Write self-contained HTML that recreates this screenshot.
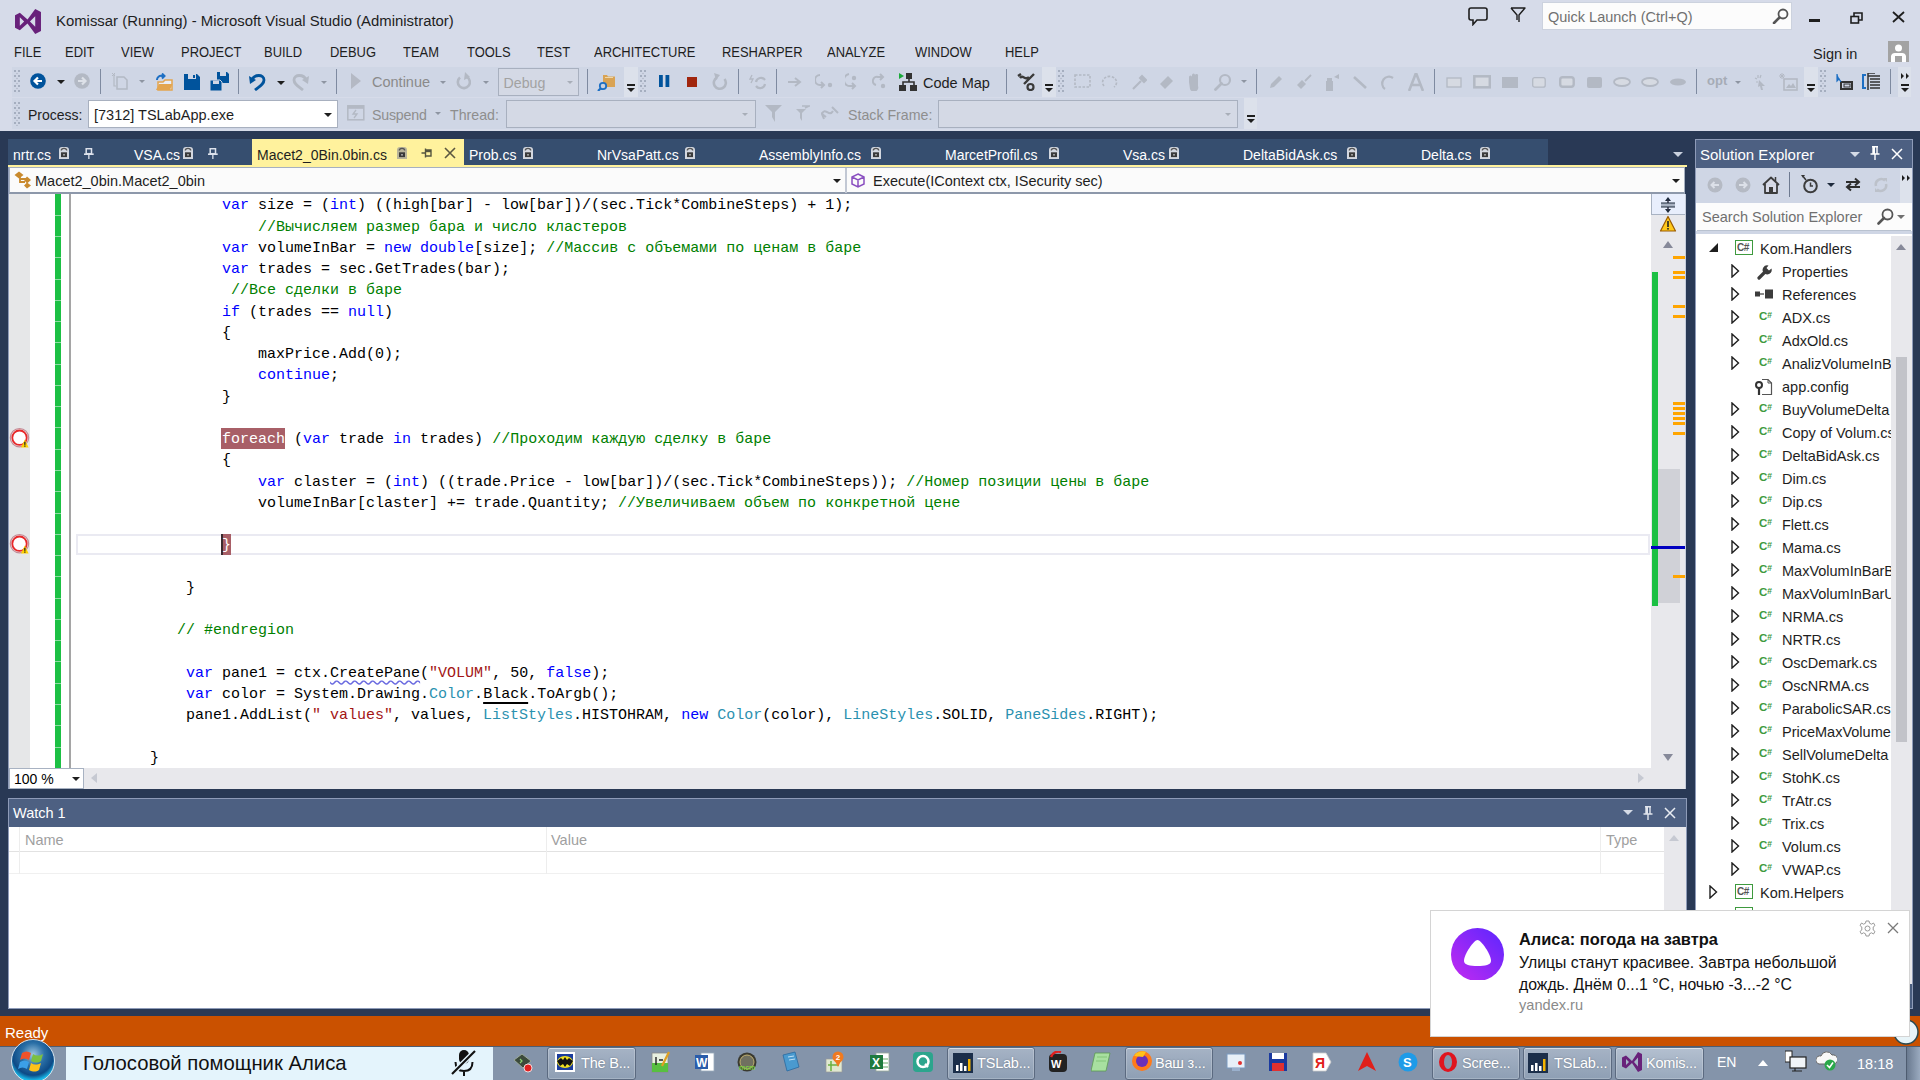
<!DOCTYPE html>
<html><head><meta charset="utf-8">
<style>
*{margin:0;padding:0;box-sizing:border-box}
html,body{width:1920px;height:1080px;overflow:hidden;background:#D6DBE9;font-family:"Liberation Sans",sans-serif;position:relative}
.a{position:absolute}
.t{position:absolute;white-space:nowrap;line-height:1}
.mono{font-family:"Liberation Mono",monospace}
.sep{position:absolute;width:1px;background:#9AA5B8}
.grip{position:absolute;width:6px;background-image:radial-gradient(circle,#8E98AA 0.8px,transparent 1px);background-size:3px 3px}
.dd{position:absolute;width:0;height:0;border-left:4px solid transparent;border-right:4px solid transparent;border-top:4px solid #1E1E1E}
.ddg{position:absolute;width:0;height:0;border-left:4px solid transparent;border-right:4px solid transparent;border-top:4px solid #A0A6B0}
/* code */
.ln{position:absolute;left:78px;height:21.25px;line-height:21.25px;font-family:"Liberation Mono",monospace;font-size:15px;white-space:pre;color:#000}
.k{color:#0000FF}.c{color:#008000}.s{color:#A31515}.ty{color:#2B91AF}
/* solution explorer rows */
.row{position:absolute;height:23px;line-height:23px;font-size:14.5px;color:#1E1E1E;white-space:nowrap}
.exp{position:absolute;width:0;height:0;border-top:5px solid transparent;border-bottom:5px solid transparent;border-left:6px solid #1E1E1E}
.exp::after{content:"";position:absolute;left:-5px;top:-3px;border-top:3px solid transparent;border-bottom:3px solid transparent;border-left:3.5px solid #fff}
.cs{position:absolute;font-size:10px;font-weight:bold;color:#3E9A3E;line-height:1;letter-spacing:-0.5px}
.tab{position:absolute;top:139px;height:26px;font-size:14px;color:#fff}
.tbtn{position:absolute;top:1047px;height:32px;border:1px solid #5E6E84;border-radius:3px;background:linear-gradient(#A9B6C8,#8C9DB3);box-shadow:inset 0 0 0 1px rgba(255,255,255,0.35)}
.tbtxt{position:absolute;top:8px;font-size:16px;color:#fff;white-space:nowrap;line-height:1}
.fe{color:#fff}.br{color:#fff}.sq{text-decoration:underline wavy #6A6AE0;text-underline-offset:3px}.ul{text-decoration:underline #000 2px;text-underline-offset:4px}
</style></head><body>

<!-- ============ TITLE BAR ============ -->
<svg class="a" style="left:15px;top:9px" width="26" height="25" viewBox="0 0 27 26"><path d="M0,6.5 L5,4 L13,11 L21,0 L27,3 L27,23 L21,26 L13,15 L5,22 L0,19.5Z M5,8.5 L5,17.5 L9.5,13Z M21,7.5 L15.5,13 L21,18.5Z" fill="#68217A" fill-rule="evenodd"/></svg>
<div class="t" style="left:56px;top:14px;font-size:14.9px;color:#1E1E1E">Komissar (Running) - Microsoft Visual Studio (Administrator)</div>

<!-- title right -->
<svg class="a" style="left:1468px;top:7px" width="20" height="19" viewBox="0 0 20 19"><path d="M3,1 H17 A2,2 0 0 1 19,3 V11 A2,2 0 0 1 17,13 H9 L5,17.5 V13 H3 A2,2 0 0 1 1,11 V3 A2,2 0 0 1 3,1Z" fill="none" stroke="#1E1E1E" stroke-width="1.6"/></svg>
<svg class="a" style="left:1510px;top:7px" width="16" height="16" viewBox="0 0 16 16"><path d="M1,1 H15 L9,8 V15 M1,1 L7,8 V13" fill="none" stroke="#1E1E1E" stroke-width="1.4" stroke-linejoin="round"/></svg>
<div class="a" style="left:1542px;top:2px;width:250px;height:28px;background:#FCFCFC;border:1px solid #CCD2DE"></div>
<div class="t" style="left:1548px;top:10px;font-size:14.5px;color:#717171">Quick Launch (Ctrl+Q)</div>
<svg class="a" style="left:1772px;top:8px" width="17" height="16" viewBox="0 0 17 16"><circle cx="11" cy="6" r="4.5" fill="none" stroke="#555" stroke-width="1.8"/><path d="M7.5,9.5 L2,15" stroke="#555" stroke-width="2.6" stroke-linecap="round"/></svg>
<div class="a" style="left:1809px;top:19px;width:11px;height:3px;background:#1E1E1E"></div>
<svg class="a" style="left:1850px;top:12px" width="13" height="12" viewBox="0 0 13 12"><rect x="1" y="4.5" width="7.5" height="6.5" fill="none" stroke="#1E1E1E" stroke-width="1.6"/><path d="M4,4.5 V1 H12 V8 H8.5" fill="none" stroke="#1E1E1E" stroke-width="1.6"/></svg>
<svg class="a" style="left:1892px;top:11px" width="13" height="12" viewBox="0 0 13 12"><path d="M1,1 L12,11 M12,1 L1,11" stroke="#1E1E1E" stroke-width="1.8"/></svg>
<div class="t" style="left:1813px;top:47px;font-size:14.5px;color:#1E1E1E">Sign in</div>
<svg class="a" style="left:1888px;top:41px" width="21" height="21" viewBox="0 0 21 21"><rect width="21" height="21" fill="#A3A3A3"/><circle cx="10.5" cy="7" r="3.5" fill="#fff"/><path d="M3,21 V15 A4,4 0 0 1 7,12 H14 A4,4 0 0 1 18,15 V21Z" fill="#fff"/><rect x="7" y="15" width="7" height="6" fill="#A3A3A3"/></svg>

<!-- ============ MENU ============ -->
<div class="t" style="top:43.5px;font-size:15.5px;color:#1E1E1E">
<span class="a" style="transform:scaleX(0.835);transform-origin:0 0;left:14px">FILE</span><span class="a" style="transform:scaleX(0.835);transform-origin:0 0;left:65px">EDIT</span><span class="a" style="transform:scaleX(0.835);transform-origin:0 0;left:121px">VIEW</span><span class="a" style="transform:scaleX(0.835);transform-origin:0 0;left:181px">PROJECT</span><span class="a" style="transform:scaleX(0.835);transform-origin:0 0;left:264px">BUILD</span><span class="a" style="transform:scaleX(0.835);transform-origin:0 0;left:330px">DEBUG</span><span class="a" style="transform:scaleX(0.835);transform-origin:0 0;left:403px">TEAM</span><span class="a" style="transform:scaleX(0.835);transform-origin:0 0;left:467px">TOOLS</span><span class="a" style="transform:scaleX(0.835);transform-origin:0 0;left:537px">TEST</span><span class="a" style="transform:scaleX(0.835);transform-origin:0 0;left:594px">ARCHITECTURE</span><span class="a" style="transform:scaleX(0.835);transform-origin:0 0;left:722px">RESHARPER</span><span class="a" style="transform:scaleX(0.835);transform-origin:0 0;left:827px">ANALYZE</span><span class="a" style="transform:scaleX(0.835);transform-origin:0 0;left:915px">WINDOW</span><span class="a" style="transform:scaleX(0.835);transform-origin:0 0;left:1005px">HELP</span>
</div>

<!-- ============ TOOLBARS ============ -->
<div class="a" style="left:12px;top:67px;width:612px;height:30px;background:#CFD6E5"></div>
<div class="a" style="left:624px;top:67px;width:14px;height:30px;background:#DCE1EB"></div>
<div class="a" style="left:627.0px;top:84px;width:8px;height:1.6px;background:#1E1E1E"></div>
<div class="a" style="left:627.0px;top:88px;width:0;height:0;border-left:4px solid transparent;border-right:4px solid transparent;border-top:4px solid #1E1E1E"></div>
<div class="a" style="left:638px;top:67px;width:404px;height:30px;background:#CFD6E5"></div>
<div class="a" style="left:1042px;top:67px;width:14px;height:30px;background:#DCE1EB"></div>
<div class="a" style="left:1045.0px;top:84px;width:8px;height:1.6px;background:#1E1E1E"></div>
<div class="a" style="left:1045.0px;top:88px;width:0;height:0;border-left:4px solid transparent;border-right:4px solid transparent;border-top:4px solid #1E1E1E"></div>
<div class="a" style="left:1056px;top:67px;width:748px;height:30px;background:#CFD6E5"></div>
<div class="a" style="left:1804px;top:67px;width:14px;height:30px;background:#DCE1EB"></div>
<div class="a" style="left:1807.0px;top:84px;width:8px;height:1.6px;background:#1E1E1E"></div>
<div class="a" style="left:1807.0px;top:88px;width:0;height:0;border-left:4px solid transparent;border-right:4px solid transparent;border-top:4px solid #1E1E1E"></div>
<div class="a" style="left:1818px;top:67px;width:80px;height:30px;background:#CFD6E5"></div>
<div class="a" style="left:1898px;top:67px;width:13px;height:30px;background:#DCE1EB"></div>
<div class="a" style="left:1900.5px;top:84px;width:8px;height:1.6px;background:#1E1E1E"></div>
<div class="a" style="left:1900.5px;top:88px;width:0;height:0;border-left:4px solid transparent;border-right:4px solid transparent;border-top:4px solid #1E1E1E"></div>
<svg class="a" style="left:1899.5px;top:72px" width="10" height="8" viewBox="0 0 10 8"><path d="M1,1 L4,4 L1,7Z M6,1 L9,4 L6,7Z" fill="#1E1E1E"/></svg>
<svg class="a" style="left:14px;top:70px" width="6" height="23" viewBox="0 0 6 23"><circle cx="1" cy="1" r="0.8" fill="#707B90"/><circle cx="5" cy="1" r="0.8" fill="#707B90"/><circle cx="3" cy="3.5" r="0.7" fill="#A8B0C0"/><circle cx="1" cy="6" r="0.8" fill="#707B90"/><circle cx="5" cy="6" r="0.8" fill="#707B90"/><circle cx="3" cy="8.5" r="0.7" fill="#A8B0C0"/><circle cx="1" cy="11" r="0.8" fill="#707B90"/><circle cx="5" cy="11" r="0.8" fill="#707B90"/><circle cx="3" cy="13.5" r="0.7" fill="#A8B0C0"/><circle cx="1" cy="16" r="0.8" fill="#707B90"/><circle cx="5" cy="16" r="0.8" fill="#707B90"/><circle cx="3" cy="18.5" r="0.7" fill="#A8B0C0"/><circle cx="1" cy="21" r="0.8" fill="#707B90"/><circle cx="5" cy="21" r="0.8" fill="#707B90"/><circle cx="3" cy="23.5" r="0.7" fill="#A8B0C0"/></svg>
<svg class="a" style="left:30px;top:73px" width="16" height="16" viewBox="0 0 16 16"><circle cx="8" cy="8" r="7.8" fill="#00539C"/><path d="M12,8 H5 M8,4.5 L4.5,8 L8,11.5" fill="none" stroke="#fff" stroke-width="2.2"/></svg>
<div class="a" style="left:57px;top:80px;width:0;height:0;border-left:4.0px solid transparent;border-right:4.0px solid transparent;border-top:4.0px solid #1E1E1E"></div>
<svg class="a" style="left:74px;top:73px" width="16" height="16" viewBox="0 0 16 16"><circle cx="8" cy="8" r="7.8" fill="#B3B9C4"/><path d="M4,8 H11 M8,4.5 L11.5,8 L8,11.5" fill="none" stroke="#DDE1E8" stroke-width="2.2"/></svg>
<div class="a" style="left:100px;top:69px;width:1px;height:25px;background:#7E8AA0"></div>
<svg class="a" style="left:111px;top:72px" width="17" height="18" viewBox="0 0 17 18"><path d="M6,5 H13 L16,8 V17 H6Z" fill="none" stroke="#B3B9C4" stroke-width="1.5"/><path d="M3,2 V14 H5" fill="none" stroke="#B3B9C4" stroke-width="1.2"/><path d="M1,1 L4,4 M4,1 L1,4" stroke="#B3B9C4" stroke-width="1"/></svg>
<div class="a" style="left:139px;top:80px;width:0;height:0;border-left:3.5px solid transparent;border-right:3.5px solid transparent;border-top:3.5px solid #8E95A2"></div>
<svg class="a" style="left:155px;top:73px" width="18" height="18" viewBox="0 0 18 18"><path d="M3,9 H8 L10,7 H17 V17 H3Z" fill="#E9EDF5" stroke="#E3A54F" stroke-width="1.5"/><path d="M1,17 L4,11 H17.5 L15,17Z" fill="#E3A54F"/><path d="M2,7 A4,4 0 0 1 7,3 H9 M7,0.5 L9.5,3 L7,5.5" fill="none" stroke="#1D6FC3" stroke-width="2"/></svg>
<svg class="a" style="left:184px;top:74px" width="16" height="16" viewBox="0 0 16 16"><path d="M0,0 H13 L16,3 V16 H0Z" fill="#00539C"/><rect x="4" y="0" width="8" height="5" fill="#CFD6E5"/><rect x="9" y="1" width="2" height="3" fill="#00539C"/></svg>
<svg class="a" style="left:210px;top:72px" width="19" height="19" viewBox="0 0 19 19"><path d="M7,0 H17 L19,2 V11 H7Z" fill="#00539C"/><rect x="10" y="0" width="6" height="4" fill="#CFD6E5"/><path d="M0,8 H10 L12,10 V19 H0Z" fill="#00539C" stroke="#CFD6E5" stroke-width="1"/><rect x="3" y="8.5" width="6" height="3.5" fill="#CFD6E5"/></svg>
<div class="a" style="left:238px;top:69px;width:1px;height:25px;background:#7E8AA0"></div>
<svg class="a" style="left:249px;top:73px" width="17" height="18" viewBox="0 0 17 18"><path d="M3,7 C5,1 15,1 15,7 C15,11 11,13 6,17" fill="none" stroke="#00539C" stroke-width="2.8"/><path d="M0,3 L1,11 L7,7Z" fill="#00539C"/></svg>
<div class="a" style="left:277px;top:81px;width:0;height:0;border-left:4.0px solid transparent;border-right:4.0px solid transparent;border-top:4.0px solid #1E1E1E"></div>
<svg class="a" style="left:292px;top:73px" width="17" height="18" viewBox="0 0 17 18"><path d="M14,7 C12,1 2,1 2,7 C2,11 6,13 11,17" fill="none" stroke="#B3B9C4" stroke-width="2.8"/><path d="M17,3 L16,11 L10,7Z" fill="#B3B9C4"/></svg>
<div class="a" style="left:321px;top:81px;width:0;height:0;border-left:3.5px solid transparent;border-right:3.5px solid transparent;border-top:3.5px solid #8E95A2"></div>
<div class="a" style="left:336px;top:69px;width:1px;height:25px;background:#7E8AA0"></div>
<svg class="a" style="left:351px;top:73px" width="10" height="16" viewBox="0 0 10 16"><path d="M0,0 L10,8 L0,16Z" fill="#B4B9C4"/></svg>
<div class="t" style="left:372px;top:75px;font-size:14.5px;color:#8A8A8A;">Continue</div>
<div class="a" style="left:440px;top:81px;width:0;height:0;border-left:3.5px solid transparent;border-right:3.5px solid transparent;border-top:3.5px solid #8E95A2"></div>
<svg class="a" style="left:456px;top:72px" width="15" height="18" viewBox="0 0 15 18"><path d="M11,5 A6,6 0 1 1 4,5.5" fill="none" stroke="#B3B9C4" stroke-width="2.6"/><path d="M9,0 L14,5 L8,8Z" fill="#B3B9C4"/></svg>
<div class="a" style="left:483px;top:81px;width:0;height:0;border-left:3.5px solid transparent;border-right:3.5px solid transparent;border-top:3.5px solid #8E95A2"></div>
<div class="a" style="left:498px;top:68px;width:81px;height:28px;background:#D4D9E5;border:1px solid #A8B0BF"></div>
<div class="t" style="left:503.5px;top:75.5px;font-size:14.2px;color:#A2A2A2;">Debug</div>
<div class="a" style="left:567px;top:81px;width:0;height:0;border-left:3.5px solid transparent;border-right:3.5px solid transparent;border-top:3.5px solid #A8AEB8"></div>
<div class="a" style="left:587px;top:69px;width:1px;height:25px;background:#7E8AA0"></div>
<svg class="a" style="left:597px;top:73px" width="19" height="18" viewBox="0 0 19 18"><path d="M6,2 H10 L11,3.5 H18 V14 H6Z" fill="#D9A354"/><rect x="8" y="4" width="8" height="1" fill="#F0D8A8"/><circle cx="6" cy="13" r="3.2" fill="#C9D1DF" stroke="#1D6FC3" stroke-width="1.8"/><path d="M3.5,15.5 L1,18" stroke="#1D6FC3" stroke-width="2.2"/></svg>
<svg class="a" style="left:640px;top:70px" width="6" height="23" viewBox="0 0 6 23"><circle cx="1" cy="1" r="0.8" fill="#707B90"/><circle cx="5" cy="1" r="0.8" fill="#707B90"/><circle cx="3" cy="3.5" r="0.7" fill="#A8B0C0"/><circle cx="1" cy="6" r="0.8" fill="#707B90"/><circle cx="5" cy="6" r="0.8" fill="#707B90"/><circle cx="3" cy="8.5" r="0.7" fill="#A8B0C0"/><circle cx="1" cy="11" r="0.8" fill="#707B90"/><circle cx="5" cy="11" r="0.8" fill="#707B90"/><circle cx="3" cy="13.5" r="0.7" fill="#A8B0C0"/><circle cx="1" cy="16" r="0.8" fill="#707B90"/><circle cx="5" cy="16" r="0.8" fill="#707B90"/><circle cx="3" cy="18.5" r="0.7" fill="#A8B0C0"/><circle cx="1" cy="21" r="0.8" fill="#707B90"/><circle cx="5" cy="21" r="0.8" fill="#707B90"/><circle cx="3" cy="23.5" r="0.7" fill="#A8B0C0"/></svg>
<svg class="a" style="left:659px;top:75px" width="11" height="12" viewBox="0 0 11 12"><rect x="0" y="0" width="3.8" height="12" fill="#00539C"/><rect x="6.5" y="0" width="3.8" height="12" fill="#00539C"/></svg>
<svg class="a" style="left:687px;top:77px" width="10" height="10" viewBox="0 0 10 10"><rect x="0" y="0" width="10" height="10" fill="#A1260D"/></svg>
<svg class="a" style="left:712px;top:73px" width="16" height="18" viewBox="0 0 16 18"><path d="M12.5,6 A6,6 0 1 1 5,4.5" fill="none" stroke="#B3B9C4" stroke-width="2.6"/><path d="M2,0 L8,2 L4,7Z" fill="#B3B9C4"/></svg>
<div class="a" style="left:738px;top:69px;width:1px;height:25px;background:#7E8AA0"></div>
<svg class="a" style="left:749px;top:73px" width="18" height="17" viewBox="0 0 18 17"><path d="M3,2 L1,6 H4 L2,10" fill="none" stroke="#B3B9C4" stroke-width="1.3"/><path d="M7,9 A5,5 0 0 1 16,7 M16,11 A5,5 0 0 1 7,13" fill="none" stroke="#B3B9C4" stroke-width="2.2"/></svg>
<div class="a" style="left:776px;top:69px;width:1px;height:25px;background:#7E8AA0"></div>
<svg class="a" style="left:788px;top:77px" width="14" height="10" viewBox="0 0 14 10"><path d="M0,5 H11 M7,1 L12,5 L7,9" fill="none" stroke="#B3B9C4" stroke-width="2"/></svg>
<svg class="a" style="left:815px;top:73px" width="18" height="17" viewBox="0 0 18 17"><path d="M5,2 A5,5 0 0 0 5,12 H9 M6,9 L9,12 L6,15" fill="none" stroke="#B3B9C4" stroke-width="2"/><circle cx="15" cy="12" r="2.2" fill="#B3B9C4"/></svg>
<svg class="a" style="left:845px;top:72px" width="15" height="19" viewBox="0 0 15 19"><path d="M4,2 A6,6 0 0 0 6,14 H9 M7,11 L10,14 L7,17" fill="none" stroke="#B3B9C4" stroke-width="2"/><circle cx="9" cy="6" r="2.2" fill="#B3B9C4"/></svg>
<svg class="a" style="left:872px;top:73px" width="16" height="17" viewBox="0 0 16 17"><path d="M10,4 H6 A4,4 0 0 0 4,12 M8,1 L11,4 L8,7" fill="none" stroke="#B3B9C4" stroke-width="2"/><circle cx="11" cy="13" r="2.2" fill="#B3B9C4"/></svg>
<svg class="a" style="left:899px;top:73px" width="18" height="18" viewBox="0 0 18 18"><rect x="7" y="0" width="6" height="6" fill="#333"/><path d="M0,0 L5,3 L0,6Z" fill="#1AAA3A"/><path d="M10,6 V9 M4,12 V9 H15 V12" fill="none" stroke="#333" stroke-width="1.6"/><rect x="0" y="12" width="7" height="6" fill="#333"/><rect x="11" y="12" width="7" height="6" fill="#333"/></svg>
<div class="t" style="left:923px;top:75.5px;font-size:14.5px;color:#1E1E1E;">Code Map</div>
<div class="a" style="left:1006px;top:69px;width:1px;height:25px;background:#7E8AA0"></div>
<svg class="a" style="left:1017px;top:73px" width="19" height="18" viewBox="0 0 19 18"><path d="M1,3 L4,1 M3,5 C6,1 8,8 12,4 M7,11 L17,1" fill="none" stroke="#3A3A3A" stroke-width="2.4"/><circle cx="13.5" cy="14" r="3" fill="none" stroke="#3A3A3A" stroke-width="2.2"/></svg>
<svg class="a" style="left:1058px;top:70px" width="6" height="23" viewBox="0 0 6 23"><circle cx="1" cy="1" r="0.8" fill="#707B90"/><circle cx="5" cy="1" r="0.8" fill="#707B90"/><circle cx="3" cy="3.5" r="0.7" fill="#A8B0C0"/><circle cx="1" cy="6" r="0.8" fill="#707B90"/><circle cx="5" cy="6" r="0.8" fill="#707B90"/><circle cx="3" cy="8.5" r="0.7" fill="#A8B0C0"/><circle cx="1" cy="11" r="0.8" fill="#707B90"/><circle cx="5" cy="11" r="0.8" fill="#707B90"/><circle cx="3" cy="13.5" r="0.7" fill="#A8B0C0"/><circle cx="1" cy="16" r="0.8" fill="#707B90"/><circle cx="5" cy="16" r="0.8" fill="#707B90"/><circle cx="3" cy="18.5" r="0.7" fill="#A8B0C0"/><circle cx="1" cy="21" r="0.8" fill="#707B90"/><circle cx="5" cy="21" r="0.8" fill="#707B90"/><circle cx="3" cy="23.5" r="0.7" fill="#A8B0C0"/></svg>
<svg class="a" style="left:1074px;top:74px" width="17" height="14" viewBox="0 0 17 14"><rect x="1" y="1" width="15" height="12" fill="none" stroke="#B3B9C4" stroke-width="1.6" stroke-dasharray="2.5,1.5"/></svg>
<svg class="a" style="left:1101px;top:74px" width="18" height="15" viewBox="0 0 18 15"><path d="M3,12 A7,6 0 1 1 13,13" fill="none" stroke="#B3B9C4" stroke-width="1.6" stroke-dasharray="2.5,1.5"/></svg>
<svg class="a" style="left:1131px;top:73px" width="16" height="18" viewBox="0 0 16 18"><path d="M2,16 L10,8" stroke="#B3B9C4" stroke-width="2.2"/><path d="M9,5 L13,9 M11,3 L15,7 L13,9 L9,5Z" fill="#B3B9C4" stroke="#B3B9C4" stroke-width="2"/></svg>
<svg class="a" style="left:1159px;top:75px" width="15" height="14" viewBox="0 0 15 14"><path d="M1,9 L9,1 L14,6 L6,14Z" fill="#B3B9C4"/></svg>
<svg class="a" style="left:1186px;top:72px" width="16" height="19" viewBox="0 0 16 19"><path d="M3,10 V5 A1.5,1.5 0 0 1 6,5 V3 A1.5,1.5 0 0 1 9,3 A1.5,1.5 0 0 1 12,4 V14 A4,4 0 0 1 4,17Z" fill="#B3B9C4"/></svg>
<svg class="a" style="left:1214px;top:73px" width="18" height="18" viewBox="0 0 18 18"><circle cx="11" cy="7" r="5" fill="none" stroke="#B3B9C4" stroke-width="2.2"/><path d="M7.5,10.5 L1.5,16.5" stroke="#B3B9C4" stroke-width="2.8" stroke-linecap="round"/></svg>
<div class="a" style="left:1241px;top:80px;width:0;height:0;border-left:3.5px solid transparent;border-right:3.5px solid transparent;border-top:3.5px solid #8E95A2"></div>
<div class="a" style="left:1256px;top:69px;width:1px;height:25px;background:#7E8AA0"></div>
<svg class="a" style="left:1269px;top:75px" width="14" height="14" viewBox="0 0 14 14"><path d="M1,13 L2,9 L10,1 L13,4 L5,12Z" fill="#B3B9C4"/></svg>
<svg class="a" style="left:1296px;top:74px" width="16" height="16" viewBox="0 0 16 16"><path d="M9,7 L15,1" stroke="#B3B9C4" stroke-width="1.8"/><path d="M1,11 L6,6 L10,10 L5,15Z" fill="#B3B9C4"/></svg>
<svg class="a" style="left:1326px;top:74px" width="14" height="17" viewBox="0 0 14 17"><rect x="0" y="7" width="7" height="10" fill="#B3B9C4"/><rect x="1" y="4" width="5" height="3" fill="#B3B9C4"/><path d="M8,3 L13,0 V5Z" fill="#B3B9C4"/></svg>
<svg class="a" style="left:1353px;top:76px" width="14" height="13" viewBox="0 0 14 13"><path d="M1,1 L13,12" stroke="#B3B9C4" stroke-width="2.6"/></svg>
<svg class="a" style="left:1380px;top:74px" width="15" height="16" viewBox="0 0 15 16"><path d="M13,4 A6.5,6.5 0 1 0 5,15" fill="none" stroke="#B3B9C4" stroke-width="2.2"/></svg>
<svg class="a" style="left:1408px;top:73px" width="16" height="18" viewBox="0 0 16 18"><path d="M1,18 L8,0 L15,18 M3.5,12 H12.5" fill="none" stroke="#B3B9C4" stroke-width="2.6"/></svg>
<div class="a" style="left:1434px;top:69px;width:1px;height:25px;background:#7E8AA0"></div>
<svg class="a" style="left:1446px;top:77px" width="16" height="11" viewBox="0 0 16 11"><rect x="1" y="1" width="14" height="9" fill="#D6DAE2" stroke="#B3B9C4" stroke-width="1.3"/></svg>
<svg class="a" style="left:1473px;top:75px" width="18" height="14" viewBox="0 0 18 14"><rect x="1.3" y="1.3" width="15.5" height="11" fill="#D6DAE2" stroke="#B3B9C4" stroke-width="2.5"/></svg>
<svg class="a" style="left:1502px;top:77px" width="16" height="11" viewBox="0 0 16 11"><rect x="0" y="0" width="16" height="11" fill="#B3B9C4"/></svg>
<svg class="a" style="left:1532px;top:77px" width="14" height="11" viewBox="0 0 14 11"><rect x="0.7" y="0.7" width="12.5" height="9.5" rx="2" fill="#D6DAE2" stroke="#B3B9C4" stroke-width="1.3"/></svg>
<svg class="a" style="left:1559px;top:76px" width="16" height="12" viewBox="0 0 16 12"><rect x="1.2" y="1.2" width="13.5" height="9.5" rx="2.5" fill="#D6DAE2" stroke="#B3B9C4" stroke-width="2.4"/></svg>
<svg class="a" style="left:1587px;top:77px" width="15" height="11" viewBox="0 0 15 11"><rect x="0" y="0" width="15" height="11" rx="2" fill="#B3B9C4"/></svg>
<svg class="a" style="left:1613px;top:77px" width="18" height="10" viewBox="0 0 18 10"><ellipse cx="9" cy="5" rx="8" ry="4" fill="#D6DAE2" stroke="#B3B9C4" stroke-width="1.8"/></svg>
<svg class="a" style="left:1641px;top:77px" width="18" height="10" viewBox="0 0 18 10"><ellipse cx="9" cy="5" rx="8" ry="4" fill="#D6DAE2" stroke="#B3B9C4" stroke-width="1.8"/></svg>
<svg class="a" style="left:1670px;top:78px" width="16" height="8" viewBox="0 0 16 8"><ellipse cx="8" cy="4" rx="8" ry="3.5" fill="#B3B9C4"/></svg>
<div class="a" style="left:1696px;top:69px;width:1px;height:25px;background:#7E8AA0"></div>
<div class="t" style="left:1707px;top:73.5px;font-size:13px;color:#A6ACB6;font-weight:bold">opt</div>
<div class="a" style="left:1735px;top:81px;width:0;height:0;border-left:3.5px solid transparent;border-right:3.5px solid transparent;border-top:3.5px solid #8E95A2"></div>
<svg class="a" style="left:1754px;top:74px" width="12" height="16" viewBox="0 0 12 16"><path d="M4,1 V4 M1,4 L3,5 M7,1 L6,4 M2,8 H4" stroke="#B3B9C4" stroke-width="1.2"/><path d="M5,6 L11,12 L8,12 L9,16 L7,16 L6,12 L4,13Z" fill="#B3B9C4"/></svg>
<svg class="a" style="left:1779px;top:73px" width="19" height="18" viewBox="0 0 19 18"><rect x="5" y="6" width="13" height="11" fill="none" stroke="#B3B9C4" stroke-width="1.6"/><path d="M7,15 L10,11 L12,13 L14,10 L17,15Z" fill="#B3B9C4"/><path d="M3,0 V6 M0,3 H6 M1,1 L5,5 M5,1 L1,5" stroke="#B3B9C4" stroke-width="1"/></svg>
<svg class="a" style="left:1820px;top:70px" width="6" height="23" viewBox="0 0 6 23"><circle cx="1" cy="1" r="0.8" fill="#707B90"/><circle cx="5" cy="1" r="0.8" fill="#707B90"/><circle cx="3" cy="3.5" r="0.7" fill="#A8B0C0"/><circle cx="1" cy="6" r="0.8" fill="#707B90"/><circle cx="5" cy="6" r="0.8" fill="#707B90"/><circle cx="3" cy="8.5" r="0.7" fill="#A8B0C0"/><circle cx="1" cy="11" r="0.8" fill="#707B90"/><circle cx="5" cy="11" r="0.8" fill="#707B90"/><circle cx="3" cy="13.5" r="0.7" fill="#A8B0C0"/><circle cx="1" cy="16" r="0.8" fill="#707B90"/><circle cx="5" cy="16" r="0.8" fill="#707B90"/><circle cx="3" cy="18.5" r="0.7" fill="#A8B0C0"/><circle cx="1" cy="21" r="0.8" fill="#707B90"/><circle cx="5" cy="21" r="0.8" fill="#707B90"/><circle cx="3" cy="23.5" r="0.7" fill="#A8B0C0"/></svg>
<svg class="a" style="left:1836px;top:74px" width="17" height="16" viewBox="0 0 17 16"><rect x="5" y="8" width="11" height="7" fill="none" stroke="#333" stroke-width="2"/><rect x="8" y="10" width="6" height="3" fill="none" stroke="#333" stroke-width="1"/><path d="M1,0 L1,7 L3,5 L5,8" fill="#1D6FC3" stroke="#1D6FC3" stroke-width="1.2"/></svg>
<svg class="a" style="left:1862px;top:73px" width="19" height="18" viewBox="0 0 19 18"><path d="M4,2 H1 V15 H4" fill="none" stroke="#1D6FC3" stroke-width="2"/><path d="M6,0 H13 M6,3 H18 M8,6 H18 M8,9 H18 M8,12 H18 M8,15 H18 M6,0 V17" stroke="#333" stroke-width="1.5"/></svg>
<div class="a" style="left:1890px;top:69px;width:1px;height:25px;background:#7E8AA0"></div>
<div class="a" style="left:12px;top:98px;width:1232px;height:31px;background:#CFD6E5"></div>
<div class="a" style="left:1244px;top:98px;width:13px;height:31px;background:#DCE1EB"></div>
<div class="a" style="left:1246.5px;top:115px;width:8px;height:1.6px;background:#1E1E1E"></div>
<div class="a" style="left:1246.5px;top:119px;width:0;height:0;border-left:4px solid transparent;border-right:4px solid transparent;border-top:4px solid #1E1E1E"></div>
<svg class="a" style="left:14px;top:102px" width="6" height="24" viewBox="0 0 6 24"><circle cx="1" cy="1" r="0.8" fill="#707B90"/><circle cx="5" cy="1" r="0.8" fill="#707B90"/><circle cx="3" cy="3.5" r="0.7" fill="#A8B0C0"/><circle cx="1" cy="6" r="0.8" fill="#707B90"/><circle cx="5" cy="6" r="0.8" fill="#707B90"/><circle cx="3" cy="8.5" r="0.7" fill="#A8B0C0"/><circle cx="1" cy="11" r="0.8" fill="#707B90"/><circle cx="5" cy="11" r="0.8" fill="#707B90"/><circle cx="3" cy="13.5" r="0.7" fill="#A8B0C0"/><circle cx="1" cy="16" r="0.8" fill="#707B90"/><circle cx="5" cy="16" r="0.8" fill="#707B90"/><circle cx="3" cy="18.5" r="0.7" fill="#A8B0C0"/><circle cx="1" cy="21" r="0.8" fill="#707B90"/><circle cx="5" cy="21" r="0.8" fill="#707B90"/><circle cx="3" cy="23.5" r="0.7" fill="#A8B0C0"/></svg>
<div class="t" style="left:28px;top:107.5px;font-size:14px;color:#1E1E1E;">Process:</div>
<div class="a" style="left:88px;top:100px;width:250px;height:28px;background:#fff;border:1px solid #A8B0BF"></div>
<div class="t" style="left:94px;top:107.5px;font-size:14.5px;color:#1E1E1E;">[7312] TSLabApp.exe</div>
<div class="a" style="left:324px;top:113px;width:0;height:0;border-left:4.0px solid transparent;border-right:4.0px solid transparent;border-top:4.0px solid #1E1E1E"></div>
<svg class="a" style="left:347px;top:105px" width="18" height="16" viewBox="0 0 18 16"><rect x="0.8" y="0.8" width="16" height="14" fill="none" stroke="#B3B9C4" stroke-width="1.5"/><rect x="0.8" y="0.8" width="16" height="3" fill="#B3B9C4"/><path d="M9,5 L6,9 H10 L7,13" fill="none" stroke="#B3B9C4" stroke-width="1.3"/></svg>
<div class="t" style="left:372px;top:107.5px;font-size:14.2px;color:#8E8E8E;letter-spacing:-0.2px">Suspend</div>
<div class="a" style="left:435px;top:112px;width:0;height:0;border-left:3.5px solid transparent;border-right:3.5px solid transparent;border-top:3.5px solid #8E95A2"></div>
<div class="t" style="left:450px;top:107.5px;font-size:14.2px;color:#8E8E8E;">Thread:</div>
<div class="a" style="left:506px;top:100px;width:250px;height:28px;background:#D4D9E5;border:1px solid #A8B0BF"></div>
<div class="a" style="left:742px;top:113px;width:0;height:0;border-left:3.5px solid transparent;border-right:3.5px solid transparent;border-top:3.5px solid #A8AEB8"></div>
<svg class="a" style="left:765px;top:105px" width="17" height="17" viewBox="0 0 17 17"><path d="M0,0 H17 L10,7 V17 L7,12 V7Z" fill="#B3B9C4"/></svg>
<svg class="a" style="left:793px;top:105px" width="18" height="17" viewBox="0 0 18 17"><path d="M3,4 H13 L9,8 V16 L7,13 V8Z" fill="#B3B9C4"/><path d="M9,1 H17 M12,3 L16,1" stroke="#B3B9C4" stroke-width="1.5"/></svg>
<svg class="a" style="left:821px;top:106px" width="18" height="14" viewBox="0 0 18 14"><path d="M1,8 C4,0 8,12 12,5 M11,1 L17,7 M5,11 L1,8 L3,13" fill="none" stroke="#B3B9C4" stroke-width="2"/></svg>
<div class="t" style="left:848px;top:107.5px;font-size:14.2px;color:#8E8E8E;">Stack Frame:</div>
<div class="a" style="left:938px;top:100px;width:300px;height:28px;background:#D4D9E5;border:1px solid #A8B0BF"></div>
<div class="a" style="left:1225px;top:113px;width:0;height:0;border-left:3.5px solid transparent;border-right:3.5px solid transparent;border-top:3.5px solid #A8AEB8"></div>


<!-- dark environment -->
<div class="a" style="left:0;top:131px;width:1920px;height:885px;background:#293955"></div>

<!-- ============ TAB WELL ============ -->
<div class="a" style="left:8px;top:139px;width:1540px;height:26px;background:#364E6F"></div>
<div class="a" style="left:252px;top:139px;width:212px;height:26px;background:#FFF29D"></div>
<div class="a" style="left:8px;top:165px;width:1679px;height:2px;background:#FFF29D"></div>

<!-- nav bar -->
<div class="a" style="left:9px;top:167px;width:1676px;height:27px;background:#FBFBFB;border:1px solid #A6B0C0;border-bottom:2px solid #8D98AA"></div>

<!-- tabs -->
<div class="t" style="left:13px;top:148px;font-size:14px;color:#fff">nrtr.cs</div>
<svg class="a" style="left:59px;top:147px" width="10" height="12" viewBox="0 0 10 12"><path d="M0,3 A3,3 0 0 1 3,0 H7 A3,3 0 0 1 10,3 V12 H0Z" fill="#D3D7DF"/><path d="M2.3,3.6 A2.7,2.2 0 0 1 7.7,3.6" fill="none" stroke="#555" stroke-width="1.3"/><rect x="2" y="5.3" width="6" height="4.8" fill="#3A3A3A"/><rect x="4.4" y="7" width="1.2" height="1.6" fill="#ddd"/></svg>
<svg class="a" style="left:84px;top:148px" width="10" height="11" viewBox="0 0 10 11"><rect x="2.2" y="0.7" width="5.3" height="5" fill="none" stroke="#DDE2EC" stroke-width="1.5"/><path d="M0,6.2 H9.7" stroke="#DDE2EC" stroke-width="1.6"/><path d="M4.85,6.5 V11" stroke="#DDE2EC" stroke-width="1.3"/></svg>
<div class="t" style="left:134px;top:148px;font-size:14px;color:#fff">VSA.cs</div>
<svg class="a" style="left:183px;top:147px" width="10" height="12" viewBox="0 0 10 12"><path d="M0,3 A3,3 0 0 1 3,0 H7 A3,3 0 0 1 10,3 V12 H0Z" fill="#D3D7DF"/><path d="M2.3,3.6 A2.7,2.2 0 0 1 7.7,3.6" fill="none" stroke="#555" stroke-width="1.3"/><rect x="2" y="5.3" width="6" height="4.8" fill="#3A3A3A"/><rect x="4.4" y="7" width="1.2" height="1.6" fill="#ddd"/></svg>
<svg class="a" style="left:208px;top:148px" width="10" height="11" viewBox="0 0 10 11"><rect x="2.2" y="0.7" width="5.3" height="5" fill="none" stroke="#DDE2EC" stroke-width="1.5"/><path d="M0,6.2 H9.7" stroke="#DDE2EC" stroke-width="1.6"/><path d="M4.85,6.5 V11" stroke="#DDE2EC" stroke-width="1.3"/></svg>
<div class="t" style="left:469px;top:148px;font-size:14px;color:#fff">Prob.cs</div>
<svg class="a" style="left:523px;top:147px" width="10" height="12" viewBox="0 0 10 12"><path d="M0,3 A3,3 0 0 1 3,0 H7 A3,3 0 0 1 10,3 V12 H0Z" fill="#D3D7DF"/><path d="M2.3,3.6 A2.7,2.2 0 0 1 7.7,3.6" fill="none" stroke="#555" stroke-width="1.3"/><rect x="2" y="5.3" width="6" height="4.8" fill="#3A3A3A"/><rect x="4.4" y="7" width="1.2" height="1.6" fill="#ddd"/></svg>
<div class="t" style="left:597px;top:148px;font-size:14px;color:#fff">NrVsaPatt.cs</div>
<svg class="a" style="left:685px;top:147px" width="10" height="12" viewBox="0 0 10 12"><path d="M0,3 A3,3 0 0 1 3,0 H7 A3,3 0 0 1 10,3 V12 H0Z" fill="#D3D7DF"/><path d="M2.3,3.6 A2.7,2.2 0 0 1 7.7,3.6" fill="none" stroke="#555" stroke-width="1.3"/><rect x="2" y="5.3" width="6" height="4.8" fill="#3A3A3A"/><rect x="4.4" y="7" width="1.2" height="1.6" fill="#ddd"/></svg>
<div class="t" style="left:759px;top:148px;font-size:14px;color:#fff">AssemblyInfo.cs</div>
<svg class="a" style="left:871px;top:147px" width="10" height="12" viewBox="0 0 10 12"><path d="M0,3 A3,3 0 0 1 3,0 H7 A3,3 0 0 1 10,3 V12 H0Z" fill="#D3D7DF"/><path d="M2.3,3.6 A2.7,2.2 0 0 1 7.7,3.6" fill="none" stroke="#555" stroke-width="1.3"/><rect x="2" y="5.3" width="6" height="4.8" fill="#3A3A3A"/><rect x="4.4" y="7" width="1.2" height="1.6" fill="#ddd"/></svg>
<div class="t" style="left:945px;top:148px;font-size:14px;color:#fff">MarcetProfil.cs</div>
<svg class="a" style="left:1049px;top:147px" width="10" height="12" viewBox="0 0 10 12"><path d="M0,3 A3,3 0 0 1 3,0 H7 A3,3 0 0 1 10,3 V12 H0Z" fill="#D3D7DF"/><path d="M2.3,3.6 A2.7,2.2 0 0 1 7.7,3.6" fill="none" stroke="#555" stroke-width="1.3"/><rect x="2" y="5.3" width="6" height="4.8" fill="#3A3A3A"/><rect x="4.4" y="7" width="1.2" height="1.6" fill="#ddd"/></svg>
<div class="t" style="left:1123px;top:148px;font-size:14px;color:#fff">Vsa.cs</div>
<svg class="a" style="left:1169px;top:147px" width="10" height="12" viewBox="0 0 10 12"><path d="M0,3 A3,3 0 0 1 3,0 H7 A3,3 0 0 1 10,3 V12 H0Z" fill="#D3D7DF"/><path d="M2.3,3.6 A2.7,2.2 0 0 1 7.7,3.6" fill="none" stroke="#555" stroke-width="1.3"/><rect x="2" y="5.3" width="6" height="4.8" fill="#3A3A3A"/><rect x="4.4" y="7" width="1.2" height="1.6" fill="#ddd"/></svg>
<div class="t" style="left:1243px;top:148px;font-size:14px;color:#fff">DeltaBidAsk.cs</div>
<svg class="a" style="left:1347px;top:147px" width="10" height="12" viewBox="0 0 10 12"><path d="M0,3 A3,3 0 0 1 3,0 H7 A3,3 0 0 1 10,3 V12 H0Z" fill="#D3D7DF"/><path d="M2.3,3.6 A2.7,2.2 0 0 1 7.7,3.6" fill="none" stroke="#555" stroke-width="1.3"/><rect x="2" y="5.3" width="6" height="4.8" fill="#3A3A3A"/><rect x="4.4" y="7" width="1.2" height="1.6" fill="#ddd"/></svg>
<div class="t" style="left:1421px;top:148px;font-size:14px;color:#fff">Delta.cs</div>
<svg class="a" style="left:1480px;top:147px" width="10" height="12" viewBox="0 0 10 12"><path d="M0,3 A3,3 0 0 1 3,0 H7 A3,3 0 0 1 10,3 V12 H0Z" fill="#D3D7DF"/><path d="M2.3,3.6 A2.7,2.2 0 0 1 7.7,3.6" fill="none" stroke="#555" stroke-width="1.3"/><rect x="2" y="5.3" width="6" height="4.8" fill="#3A3A3A"/><rect x="4.4" y="7" width="1.2" height="1.6" fill="#ddd"/></svg>
<div class="t" style="left:257px;top:148px;font-size:14px;color:#1E1E1E">Macet2_0Bin.0bin.cs</div>
<svg class="a" style="left:397px;top:147px" width="10" height="12" viewBox="0 0 10 12"><path d="M0,3 A3,3 0 0 1 3,0 H7 A3,3 0 0 1 10,3 V12 H0Z" fill="#B8B49A"/><path d="M2.3,3.6 A2.7,2.2 0 0 1 7.7,3.6" fill="none" stroke="#555" stroke-width="1.3"/><rect x="2" y="5.3" width="6" height="4.8" fill="#3A3A3A"/><rect x="4.4" y="7" width="1.2" height="1.6" fill="#ddd"/></svg>
<svg class="a" style="left:421px;top:148px" width="11" height="10" viewBox="0 0 11 10"><path d="M0.5,5 H4.5 M4.5,0.5 V9.5 M4.5,2 H10 V8 H4.5" fill="none" stroke="#55553F" stroke-width="1.4"/><rect x="4.5" y="2" width="5.5" height="2.2" fill="#55553F"/></svg>
<svg class="a" style="left:444px;top:147px" width="12" height="12" viewBox="0 0 12 12"><path d="M1,1 L11,11 M11,1 L1,11" stroke="#5B5740" stroke-width="1.6"/></svg>
<div class="a" style="left:1673px;top:152px;width:0;height:0;border-left:5px solid transparent;border-right:5px solid transparent;border-top:5px solid #C9D1DE"></div>
<svg class="a" style="left:14px;top:171px" width="19" height="18" viewBox="0 0 19 18"><path d="M5,0.5 L9.5,4 L5,7.5 L0.5,4Z" fill="#C98A2E"/><path d="M6,5 V11 H11 M6,8 H13" fill="none" stroke="#C98A2E" stroke-width="1.8"/><path d="M13,5.5 L17,9 L13,12.5 L10,9Z M13,11.5 L17,14.5 L13,17.5 L10,14.5Z" fill="#C98A2E"/></svg>
<div class="t" style="left:35px;top:173.5px;font-size:14.5px;color:#1E1E1E">Macet2_0bin.Macet2_0bin</div>
<div class="dd" style="left:833px;top:179px"></div>
<div class="a" style="left:845px;top:168px;width:2px;height:25px;background:#C2C8D4"></div>
<svg class="a" style="left:851px;top:173px" width="14" height="15" viewBox="0 0 14 15"><path d="M7,1 L13,4 V11 L7,14 L1,11 V4Z M1,4 L7,7 L13,4 M7,7 V14" fill="none" stroke="#8A4FC0" stroke-width="1.5"/></svg>
<div class="t" style="left:873px;top:173.5px;font-size:14.5px;color:#1E1E1E">Execute(IContext ctx, ISecurity sec)</div>
<div class="dd" style="left:1672px;top:179px"></div>

<!-- ============ EDITOR ============ -->
<div class="a" style="left:8px;top:167px;width:1px;height:622px;background:#8E9BB8"></div>
<div class="a" style="left:9px;top:194px;width:1642px;height:574px;background:#fff"></div>
<div class="a" style="left:9px;top:194px;width:21px;height:574px;background:#E6E7E8"></div>
<div class="a" style="left:55px;top:194px;width:6px;height:574px;background:#1CC044"></div><div class="a" style="left:55px;top:215px;width:6px;height:1px;background:#8FDCA4"></div><div class="a" style="left:55px;top:236px;width:6px;height:1px;background:#8FDCA4"></div><div class="a" style="left:55px;top:257px;width:6px;height:1px;background:#8FDCA4"></div><div class="a" style="left:55px;top:279px;width:6px;height:1px;background:#8FDCA4"></div><div class="a" style="left:55px;top:300px;width:6px;height:1px;background:#8FDCA4"></div><div class="a" style="left:55px;top:321px;width:6px;height:1px;background:#8FDCA4"></div><div class="a" style="left:55px;top:342px;width:6px;height:1px;background:#8FDCA4"></div><div class="a" style="left:55px;top:364px;width:6px;height:1px;background:#8FDCA4"></div><div class="a" style="left:55px;top:385px;width:6px;height:1px;background:#8FDCA4"></div><div class="a" style="left:55px;top:406px;width:6px;height:1px;background:#8FDCA4"></div><div class="a" style="left:55px;top:427px;width:6px;height:1px;background:#8FDCA4"></div><div class="a" style="left:55px;top:449px;width:6px;height:1px;background:#8FDCA4"></div><div class="a" style="left:55px;top:470px;width:6px;height:1px;background:#8FDCA4"></div><div class="a" style="left:55px;top:491px;width:6px;height:1px;background:#8FDCA4"></div><div class="a" style="left:55px;top:513px;width:6px;height:1px;background:#8FDCA4"></div><div class="a" style="left:55px;top:534px;width:6px;height:1px;background:#8FDCA4"></div><div class="a" style="left:55px;top:555px;width:6px;height:1px;background:#8FDCA4"></div><div class="a" style="left:55px;top:576px;width:6px;height:1px;background:#8FDCA4"></div><div class="a" style="left:55px;top:598px;width:6px;height:1px;background:#8FDCA4"></div><div class="a" style="left:55px;top:619px;width:6px;height:1px;background:#8FDCA4"></div><div class="a" style="left:55px;top:640px;width:6px;height:1px;background:#8FDCA4"></div><div class="a" style="left:55px;top:661px;width:6px;height:1px;background:#8FDCA4"></div><div class="a" style="left:55px;top:683px;width:6px;height:1px;background:#8FDCA4"></div><div class="a" style="left:55px;top:704px;width:6px;height:1px;background:#8FDCA4"></div><div class="a" style="left:55px;top:725px;width:6px;height:1px;background:#8FDCA4"></div><div class="a" style="left:55px;top:747px;width:6px;height:1px;background:#8FDCA4"></div>
<div class="a" style="left:69px;top:194px;width:2px;height:574px;background:#A5A5A5"></div>


<!-- current line box -->
<div class="a" style="left:76px;top:534px;width:1574px;height:21px;border:2px solid #EAEAF2"></div>
<!-- foreach highlight -->
<div class="a" style="left:221px;top:428px;width:64px;height:21px;background:#A85F67"></div>
<div class="a" style="left:221px;top:534px;width:10px;height:21px;background:#A85F67"></div>
<div class="a" style="left:221px;top:534px;width:2px;height:21px;background:#3A2A2E"></div>
<!-- breakpoints -->
<svg class="a" style="left:9px;top:427px" width="22" height="22" viewBox="0 0 22 22"><circle cx="10.5" cy="10.7" r="9.2" fill="none" stroke="#B86A78" stroke-width="1.1" opacity="0.75"/><circle cx="10.5" cy="10.7" r="7.2" fill="#fff" stroke="#E8282A" stroke-width="1.8"/><path d="M12,20.5 L15.8,12.5 L19.6,20.5Z" fill="#FFD200"/><rect x="15.2" y="14.8" width="1.3" height="3" fill="#222"/><rect x="15.2" y="18.5" width="1.3" height="1.2" fill="#222"/></svg>
<svg class="a" style="left:9px;top:533px" width="22" height="22" viewBox="0 0 22 22"><circle cx="10.5" cy="10.7" r="9.2" fill="none" stroke="#B86A78" stroke-width="1.1" opacity="0.75"/><circle cx="10.5" cy="10.7" r="7.2" fill="#fff" stroke="#E8282A" stroke-width="1.8"/><path d="M12,20.5 L15.8,12.5 L19.6,20.5Z" fill="#FFD200"/><rect x="15.2" y="14.8" width="1.3" height="3" fill="#222"/><rect x="15.2" y="18.5" width="1.3" height="1.2" fill="#222"/></svg>
<!-- code -->
<div class="ln" style="top:195.30px">                <span class="k">var</span> size = (<span class="k">int</span>) ((high[bar] - low[bar])/(sec.Tick*CombineSteps) + 1);</div>
<div class="ln" style="top:216.55px">                    <span class="c">//Вычисляем размер бара и число кластеров</span></div>
<div class="ln" style="top:237.80px">                <span class="k">var</span> volumeInBar = <span class="k">new</span> <span class="k">double</span>[size]; <span class="c">//Массив с объемами по ценам в баре</span></div>
<div class="ln" style="top:259.05px">                <span class="k">var</span> trades = sec.GetTrades(bar);</div>
<div class="ln" style="top:280.30px">                 <span class="c">//Все сделки в баре</span></div>
<div class="ln" style="top:301.55px">                <span class="k">if</span> (trades == <span class="k">null</span>)</div>
<div class="ln" style="top:322.80px">                {</div>
<div class="ln" style="top:344.05px">                    maxPrice.Add(0);</div>
<div class="ln" style="top:365.30px">                    <span class="k">continue</span>;</div>
<div class="ln" style="top:386.55px">                }</div>
<div class="ln" style="top:429.05px">                <span class="fe">foreach</span> (<span class="k">var</span> trade <span class="k">in</span> trades) <span class="c">//Проходим каждую сделку в баре</span></div>
<div class="ln" style="top:450.30px">                {</div>
<div class="ln" style="top:471.55px">                    <span class="k">var</span> claster = (<span class="k">int</span>) ((trade.Price - low[bar])/(sec.Tick*CombineSteps)); <span class="c">//Номер позиции цены в баре</span></div>
<div class="ln" style="top:492.80px">                    volumeInBar[claster] += trade.Quantity; <span class="c">//Увеличиваем объем по конкретной цене</span></div>
<div class="ln" style="top:535.30px">                <span class="br">}</span></div>
<div class="ln" style="top:577.80px">            }</div>
<div class="ln" style="top:620.30px">           <span class="c">// #endregion</span></div>
<div class="ln" style="top:662.80px">            <span class="k">var</span> pane1 = ctx.<span class="sq">CreatePane</span>(<span class="s">"VOLUM"</span>, 50, <span class="k">false</span>);</div>
<div class="ln" style="top:684.05px">            <span class="k">var</span> color = System.Drawing.<span class="ty">Color</span>.<span class="ul">Black</span>.ToArgb();</div>
<div class="ln" style="top:705.30px">            pane1.AddList(<span class="s">" values"</span>, values, <span class="ty">ListStyles</span>.HISTOHRAM, <span class="k">new</span> <span class="ty">Color</span>(color), <span class="ty">LineStyles</span>.SOLID, <span class="ty">PaneSides</span>.RIGHT);</div>
<div class="ln" style="top:747.80px">        }</div>


<!-- vscroll -->
<div class="a" style="left:1651px;top:194px;width:35px;height:595px;background:#E8E8EC;border-right:1px solid #C5CCDA"></div>
<div class="a" style="left:1651px;top:194px;width:34px;height:21px;background:#E8EEFC;border-left:1px solid #A8B2C2;border-bottom:1px solid #A8B2C2"></div>
<svg class="a" style="left:1660px;top:196px" width="16" height="18" viewBox="0 0 16 18"><path d="M8,1 L5,5 H11Z M8,17 L5,13 H11Z" fill="#1E2A3C"/><path d="M8,4 V7 M8,11 V14" stroke="#334" stroke-width="1.5"/><rect x="1" y="7" width="14" height="4" fill="#A9B2C2"/><path d="M1,7 H15 M1,11 H15" stroke="#1E2A3C" stroke-width="1.2"/></svg>
<svg class="a" style="left:1659px;top:215px" width="18" height="18" viewBox="0 0 18 18"><path d="M9,1.5 L16.5,16 H1.5Z" fill="#FFC91A" stroke="#9A5A00" stroke-width="1.2" stroke-linejoin="round"/><rect x="8.2" y="6" width="1.6" height="6" fill="#222"/><rect x="8.2" y="13" width="1.6" height="1.6" fill="#222"/></svg>
<div class="a" style="left:1663px;top:241px;width:0;height:0;border-left:5.5px solid transparent;border-right:5.5px solid transparent;border-bottom:7px solid #868999"></div>
<div class="a" style="left:1663px;top:754px;width:0;height:0;border-left:5.5px solid transparent;border-right:5.5px solid transparent;border-top:7px solid #868999"></div>
<div class="a" style="left:1658px;top:469px;width:22px;height:134px;background:#D0D1D7"></div>
<div class="a" style="left:1652px;top:272px;width:6px;height:334px;background:#1CC044"></div>
<div class="a" style="left:1673px;top:256px;width:12px;height:3px;background:#FFA500"></div>
<div class="a" style="left:1673px;top:271px;width:12px;height:3px;background:#FFA500"></div>
<div class="a" style="left:1673px;top:276px;width:12px;height:3px;background:#FFA500"></div>
<div class="a" style="left:1673px;top:305px;width:12px;height:3px;background:#FFA500"></div>
<div class="a" style="left:1673px;top:315px;width:12px;height:3px;background:#FFA500"></div>
<div class="a" style="left:1673px;top:402px;width:12px;height:3px;background:#FFA500"></div>
<div class="a" style="left:1673px;top:407px;width:12px;height:3px;background:#FFA500"></div>
<div class="a" style="left:1673px;top:412px;width:12px;height:3px;background:#FFA500"></div>
<div class="a" style="left:1673px;top:417px;width:12px;height:3px;background:#FFA500"></div>
<div class="a" style="left:1673px;top:422px;width:12px;height:3px;background:#FFA500"></div>
<div class="a" style="left:1673px;top:432px;width:12px;height:3px;background:#FFA500"></div>
<div class="a" style="left:1673px;top:575px;width:12px;height:3px;background:#FFA500"></div>
<div class="a" style="left:1651px;top:546px;width:34px;height:3px;background:#0000C0"></div>
<div class="a" style="left:9px;top:768px;width:1642px;height:21px;background:#E8E8EC"></div>
<div class="a" style="left:9px;top:768px;width:75px;height:21px;background:#fff;border:1px solid #A8B2C2"></div>
<div class="t" style="left:14px;top:771.5px;font-size:14px;color:#000">100 %</div>
<div class="dd" style="left:72px;top:777px"></div>
<div class="a" style="left:91px;top:773px;width:0;height:0;border-top:5px solid transparent;border-bottom:5px solid transparent;border-right:6px solid #C6C9D2"></div>
<div class="a" style="left:1638px;top:773px;width:0;height:0;border-top:5px solid transparent;border-bottom:5px solid transparent;border-left:6px solid #C6C9D2"></div>

<!-- ============ SOLUTION EXPLORER ============ -->
<div class="a" style="left:1695px;top:139px;width:218px;height:870px;background:#fff;border:1px solid #8E9BB8"></div>
<div class="a" style="left:1696px;top:140px;width:216px;height:28px;background:#4D6082"></div>
<div class="t" style="left:1700px;top:147px;font-size:15px;color:#fff">Solution Explorer</div>
<div class="a" style="left:1850px;top:152px;width:0;height:0;border-left:5px solid transparent;border-right:5px solid transparent;border-top:5px solid #D5DBE6"></div>
<svg class="a" style="left:1870px;top:146px" width="10" height="14" viewBox="0 0 10 14"><path d="M2,0.7 H8 M3,0.7 V8 M7,0.7 V8 M0.5,8 H9.5 M5,8 V14" fill="none" stroke="#fff" stroke-width="1.4"/><rect x="3" y="1" width="2" height="7" fill="#fff"/></svg>
<svg class="a" style="left:1891px;top:148px" width="12" height="12" viewBox="0 0 12 12"><path d="M1,1 L11,11 M11,1 L1,11" stroke="#fff" stroke-width="1.5"/></svg>
<div class="a" style="left:1696px;top:168px;width:204px;height:35px;background:#CFD6E5"></div>
<div class="a" style="left:1900px;top:168px;width:12px;height:35px;background:#DDE2EC"></div>
<svg class="a" style="left:1900px;top:174px" width="12" height="8" viewBox="0 0 12 8"><path d="M2,1 L5,4 L2,7Z M7,1 L10,4 L7,7Z" fill="#1E1E1E"/></svg>
<svg class="a" style="left:1707px;top:177px" width="16" height="16" viewBox="0 0 16 16"><circle cx="8" cy="8" r="7.5" fill="#B5BAC4"/><path d="M12,8 H5 M7.5,5 L4.5,8 L7.5,11" fill="none" stroke="#DCE0E8" stroke-width="2"/></svg>
<svg class="a" style="left:1735px;top:177px" width="16" height="16" viewBox="0 0 16 16"><circle cx="8" cy="8" r="7.5" fill="#B5BAC4"/><path d="M4,8 H11 M8.5,5 L11.5,8 L8.5,11" fill="none" stroke="#DCE0E8" stroke-width="2"/></svg>
<svg class="a" style="left:1762px;top:176px" width="18" height="18" viewBox="0 0 18 18"><path d="M1,9 L9,1.5 L17,9 M3,8 V17 H15 V8" fill="#D8DAE6" stroke="#3C3C3C" stroke-width="1.8" stroke-linejoin="round"/><rect x="7" y="11" width="4" height="6" fill="#3C3C3C"/><path d="M13.5,1 V5" stroke="#3C3C3C" stroke-width="1.5"/></svg>
<div class="a" style="left:1789px;top:172px;width:1px;height:25px;background:#6E7A90"></div>
<svg class="a" style="left:1800px;top:174px" width="20" height="20" viewBox="0 0 20 20"><path d="M1,1 L5,1 L3,4Z" fill="#333"/><circle cx="10.5" cy="12" r="6.3" fill="none" stroke="#3C3C3C" stroke-width="2"/><path d="M10.5,8.5 V12 H13" fill="none" stroke="#3C3C3C" stroke-width="1.5"/><path d="M3.5,3 L6,6" stroke="#333" stroke-width="1.5"/></svg>
<div class="dd" style="left:1827px;top:183px;border-top-color:#1E2A3C"></div>
<svg class="a" style="left:1845px;top:177px" width="16" height="15" viewBox="0 0 16 15"><path d="M1,5 H13 M10,1.5 L14,5 L10,8.5 M15,10 H3 M6,6.5 L2,10 L6,13.5" fill="none" stroke="#2D2D2D" stroke-width="2"/></svg>
<svg class="a" style="left:1873px;top:177px" width="16" height="16" viewBox="0 0 16 16"><path d="M3,9 A5.5,5.5 0 0 1 12,3.5 M13,7 A5.5,5.5 0 0 1 4,12.5" fill="none" stroke="#BCC1CA" stroke-width="2.5"/><path d="M10,1 L14,1 L14,5Z M6,15 L2,15 L2,11Z" fill="#BCC1CA"/></svg>
<div class="a" style="left:1697px;top:203px;width:214px;height:28px;background:#FCFCFC;border-bottom:1px solid #B9C2D0"></div>
<div class="a" style="left:1696px;top:231px;width:216px;height:3px;background:#CFD6E5"></div>
<div class="t" style="left:1702px;top:210px;font-size:14.5px;color:#707070">Search Solution Explorer</div>
<svg class="a" style="left:1877px;top:208px" width="17" height="17" viewBox="0 0 17 17"><circle cx="10.5" cy="6.5" r="5" fill="none" stroke="#555" stroke-width="1.8"/><path d="M7,10 L1.5,15.5" stroke="#555" stroke-width="2.6" stroke-linecap="round"/></svg>
<div class="a" style="left:1897px;top:215px;width:0;height:0;border-left:4px solid transparent;border-right:4px solid transparent;border-top:4px solid #707070"></div>
<div class="a" style="left:1891px;top:236px;width:21px;height:748px;background:#E8E8EC"></div>
<div class="a" style="left:1896px;top:244px;width:0;height:0;border-left:5.5px solid transparent;border-right:5.5px solid transparent;border-bottom:6px solid #868999"></div>
<div class="a" style="left:1896px;top:357px;width:11px;height:385px;background:#C2C3C9"></div>
<div class="a" style="left:1696px;top:984px;width:216px;height:24px;background:#4A5E80"></div>
<div class="a" style="left:1696px;top:233px;width:195px;height:751px;overflow:hidden">
<div class="a" style="left:13px;top:10.0px;width:0;height:0;border-left:9px solid transparent;border-bottom:9px solid #1E1E1E"></div>
<div class="a" style="left:39px;top:7.0px;width:18px;height:15px;border:1.5px solid #3E9A3E;background:#fff"><div class="t" style="left:1px;top:1.5px;font-size:10px;font-weight:bold;color:#555;letter-spacing:-0.5px">C#</div></div>
<div class="t" style="left:64px;top:8.5px;font-size:14.5px;color:#1E1E1E">Kom.Handlers</div>
<svg class="a" style="left:35px;top:31.0px" width="9" height="14" viewBox="0 0 9 14"><path d="M1,1 L7.5,7 L1,13Z" fill="#fff" stroke="#1E1E1E" stroke-width="1.4" stroke-linejoin="miter"/></svg>
<svg class="a" style="left:61px;top:30.5px" width="16" height="16" viewBox="0 0 16 16"><path d="M2,14 L8,8" stroke="#3C3C3C" stroke-width="3.2" stroke-linecap="round"/><path d="M7,9 A4.5,4.5 0 0 1 11.5,1.5 L9.5,4 L12,6.5 L14.5,4.5 A4.5,4.5 0 0 1 7,9Z" fill="#3C3C3C"/></svg>
<div class="t" style="left:86px;top:31.5px;font-size:14.5px;color:#1E1E1E">Properties</div>
<svg class="a" style="left:35px;top:54.0px" width="9" height="14" viewBox="0 0 9 14"><path d="M1,1 L7.5,7 L1,13Z" fill="#fff" stroke="#1E1E1E" stroke-width="1.4" stroke-linejoin="miter"/></svg>
<svg class="a" style="left:59px;top:55.5px" width="18" height="10" viewBox="0 0 18 10"><rect x="0" y="2.5" width="5" height="5" fill="#3C3C3C"/><path d="M5,5 H9" stroke="#3C3C3C" stroke-width="1.2"/><rect x="10" y="0.5" width="8" height="9" fill="#3C3C3C"/></svg>
<div class="t" style="left:86px;top:54.5px;font-size:14.5px;color:#1E1E1E">References</div>
<svg class="a" style="left:35px;top:77.0px" width="9" height="14" viewBox="0 0 9 14"><path d="M1,1 L7.5,7 L1,13Z" fill="#fff" stroke="#1E1E1E" stroke-width="1.4" stroke-linejoin="miter"/></svg>
<div class="t" style="left:63px;top:78.0px;font-size:11.5px;font-weight:bold;color:#3E9A3E">C<span style="font-size:8.5px;vertical-align:2px">#</span></div>
<div class="t" style="left:86px;top:77.5px;font-size:14.5px;color:#1E1E1E">ADX.cs</div>
<svg class="a" style="left:35px;top:100.0px" width="9" height="14" viewBox="0 0 9 14"><path d="M1,1 L7.5,7 L1,13Z" fill="#fff" stroke="#1E1E1E" stroke-width="1.4" stroke-linejoin="miter"/></svg>
<div class="t" style="left:63px;top:101.0px;font-size:11.5px;font-weight:bold;color:#3E9A3E">C<span style="font-size:8.5px;vertical-align:2px">#</span></div>
<div class="t" style="left:86px;top:100.5px;font-size:14.5px;color:#1E1E1E">AdxOld.cs</div>
<svg class="a" style="left:35px;top:123.0px" width="9" height="14" viewBox="0 0 9 14"><path d="M1,1 L7.5,7 L1,13Z" fill="#fff" stroke="#1E1E1E" stroke-width="1.4" stroke-linejoin="miter"/></svg>
<div class="t" style="left:63px;top:124.0px;font-size:11.5px;font-weight:bold;color:#3E9A3E">C<span style="font-size:8.5px;vertical-align:2px">#</span></div>
<div class="t" style="left:86px;top:123.5px;font-size:14.5px;color:#1E1E1E">AnalizVolumeInBar</div>
<svg class="a" style="left:59px;top:144.5px" width="18" height="18" viewBox="0 0 18 18"><path d="M7,1.5 H13 L16.5,5 V16.5 H7" fill="none" stroke="#555" stroke-width="1.2"/><path d="M13,1.5 V5 H16.5" fill="none" stroke="#555" stroke-width="1"/><circle cx="4" cy="7" r="3" fill="none" stroke="#333" stroke-width="2"/><path d="M4,9 V17" stroke="#333" stroke-width="2.2"/></svg>
<div class="t" style="left:86px;top:146.5px;font-size:14.5px;color:#1E1E1E">app.config</div>
<svg class="a" style="left:35px;top:169.0px" width="9" height="14" viewBox="0 0 9 14"><path d="M1,1 L7.5,7 L1,13Z" fill="#fff" stroke="#1E1E1E" stroke-width="1.4" stroke-linejoin="miter"/></svg>
<div class="t" style="left:63px;top:170.0px;font-size:11.5px;font-weight:bold;color:#3E9A3E">C<span style="font-size:8.5px;vertical-align:2px">#</span></div>
<div class="t" style="left:86px;top:169.5px;font-size:14.5px;color:#1E1E1E">BuyVolumeDelta</div>
<svg class="a" style="left:35px;top:192.0px" width="9" height="14" viewBox="0 0 9 14"><path d="M1,1 L7.5,7 L1,13Z" fill="#fff" stroke="#1E1E1E" stroke-width="1.4" stroke-linejoin="miter"/></svg>
<div class="t" style="left:63px;top:193.0px;font-size:11.5px;font-weight:bold;color:#3E9A3E">C<span style="font-size:8.5px;vertical-align:2px">#</span></div>
<div class="t" style="left:86px;top:192.5px;font-size:14.5px;color:#1E1E1E">Copy of Volum.cs</div>
<svg class="a" style="left:35px;top:215.0px" width="9" height="14" viewBox="0 0 9 14"><path d="M1,1 L7.5,7 L1,13Z" fill="#fff" stroke="#1E1E1E" stroke-width="1.4" stroke-linejoin="miter"/></svg>
<div class="t" style="left:63px;top:216.0px;font-size:11.5px;font-weight:bold;color:#3E9A3E">C<span style="font-size:8.5px;vertical-align:2px">#</span></div>
<div class="t" style="left:86px;top:215.5px;font-size:14.5px;color:#1E1E1E">DeltaBidAsk.cs</div>
<svg class="a" style="left:35px;top:238.0px" width="9" height="14" viewBox="0 0 9 14"><path d="M1,1 L7.5,7 L1,13Z" fill="#fff" stroke="#1E1E1E" stroke-width="1.4" stroke-linejoin="miter"/></svg>
<div class="t" style="left:63px;top:239.0px;font-size:11.5px;font-weight:bold;color:#3E9A3E">C<span style="font-size:8.5px;vertical-align:2px">#</span></div>
<div class="t" style="left:86px;top:238.5px;font-size:14.5px;color:#1E1E1E">Dim.cs</div>
<svg class="a" style="left:35px;top:261.0px" width="9" height="14" viewBox="0 0 9 14"><path d="M1,1 L7.5,7 L1,13Z" fill="#fff" stroke="#1E1E1E" stroke-width="1.4" stroke-linejoin="miter"/></svg>
<div class="t" style="left:63px;top:262.0px;font-size:11.5px;font-weight:bold;color:#3E9A3E">C<span style="font-size:8.5px;vertical-align:2px">#</span></div>
<div class="t" style="left:86px;top:261.5px;font-size:14.5px;color:#1E1E1E">Dip.cs</div>
<svg class="a" style="left:35px;top:284.0px" width="9" height="14" viewBox="0 0 9 14"><path d="M1,1 L7.5,7 L1,13Z" fill="#fff" stroke="#1E1E1E" stroke-width="1.4" stroke-linejoin="miter"/></svg>
<div class="t" style="left:63px;top:285.0px;font-size:11.5px;font-weight:bold;color:#3E9A3E">C<span style="font-size:8.5px;vertical-align:2px">#</span></div>
<div class="t" style="left:86px;top:284.5px;font-size:14.5px;color:#1E1E1E">Flett.cs</div>
<svg class="a" style="left:35px;top:307.0px" width="9" height="14" viewBox="0 0 9 14"><path d="M1,1 L7.5,7 L1,13Z" fill="#fff" stroke="#1E1E1E" stroke-width="1.4" stroke-linejoin="miter"/></svg>
<div class="t" style="left:63px;top:308.0px;font-size:11.5px;font-weight:bold;color:#3E9A3E">C<span style="font-size:8.5px;vertical-align:2px">#</span></div>
<div class="t" style="left:86px;top:307.5px;font-size:14.5px;color:#1E1E1E">Mama.cs</div>
<svg class="a" style="left:35px;top:330.0px" width="9" height="14" viewBox="0 0 9 14"><path d="M1,1 L7.5,7 L1,13Z" fill="#fff" stroke="#1E1E1E" stroke-width="1.4" stroke-linejoin="miter"/></svg>
<div class="t" style="left:63px;top:331.0px;font-size:11.5px;font-weight:bold;color:#3E9A3E">C<span style="font-size:8.5px;vertical-align:2px">#</span></div>
<div class="t" style="left:86px;top:330.5px;font-size:14.5px;color:#1E1E1E">MaxVolumInBarB</div>
<svg class="a" style="left:35px;top:353.0px" width="9" height="14" viewBox="0 0 9 14"><path d="M1,1 L7.5,7 L1,13Z" fill="#fff" stroke="#1E1E1E" stroke-width="1.4" stroke-linejoin="miter"/></svg>
<div class="t" style="left:63px;top:354.0px;font-size:11.5px;font-weight:bold;color:#3E9A3E">C<span style="font-size:8.5px;vertical-align:2px">#</span></div>
<div class="t" style="left:86px;top:353.5px;font-size:14.5px;color:#1E1E1E">MaxVolumInBarU</div>
<svg class="a" style="left:35px;top:376.0px" width="9" height="14" viewBox="0 0 9 14"><path d="M1,1 L7.5,7 L1,13Z" fill="#fff" stroke="#1E1E1E" stroke-width="1.4" stroke-linejoin="miter"/></svg>
<div class="t" style="left:63px;top:377.0px;font-size:11.5px;font-weight:bold;color:#3E9A3E">C<span style="font-size:8.5px;vertical-align:2px">#</span></div>
<div class="t" style="left:86px;top:376.5px;font-size:14.5px;color:#1E1E1E">NRMA.cs</div>
<svg class="a" style="left:35px;top:399.0px" width="9" height="14" viewBox="0 0 9 14"><path d="M1,1 L7.5,7 L1,13Z" fill="#fff" stroke="#1E1E1E" stroke-width="1.4" stroke-linejoin="miter"/></svg>
<div class="t" style="left:63px;top:400.0px;font-size:11.5px;font-weight:bold;color:#3E9A3E">C<span style="font-size:8.5px;vertical-align:2px">#</span></div>
<div class="t" style="left:86px;top:399.5px;font-size:14.5px;color:#1E1E1E">NRTR.cs</div>
<svg class="a" style="left:35px;top:422.0px" width="9" height="14" viewBox="0 0 9 14"><path d="M1,1 L7.5,7 L1,13Z" fill="#fff" stroke="#1E1E1E" stroke-width="1.4" stroke-linejoin="miter"/></svg>
<div class="t" style="left:63px;top:423.0px;font-size:11.5px;font-weight:bold;color:#3E9A3E">C<span style="font-size:8.5px;vertical-align:2px">#</span></div>
<div class="t" style="left:86px;top:422.5px;font-size:14.5px;color:#1E1E1E">OscDemark.cs</div>
<svg class="a" style="left:35px;top:445.0px" width="9" height="14" viewBox="0 0 9 14"><path d="M1,1 L7.5,7 L1,13Z" fill="#fff" stroke="#1E1E1E" stroke-width="1.4" stroke-linejoin="miter"/></svg>
<div class="t" style="left:63px;top:446.0px;font-size:11.5px;font-weight:bold;color:#3E9A3E">C<span style="font-size:8.5px;vertical-align:2px">#</span></div>
<div class="t" style="left:86px;top:445.5px;font-size:14.5px;color:#1E1E1E">OscNRMA.cs</div>
<svg class="a" style="left:35px;top:468.0px" width="9" height="14" viewBox="0 0 9 14"><path d="M1,1 L7.5,7 L1,13Z" fill="#fff" stroke="#1E1E1E" stroke-width="1.4" stroke-linejoin="miter"/></svg>
<div class="t" style="left:63px;top:469.0px;font-size:11.5px;font-weight:bold;color:#3E9A3E">C<span style="font-size:8.5px;vertical-align:2px">#</span></div>
<div class="t" style="left:86px;top:468.5px;font-size:14.5px;color:#1E1E1E">ParabolicSAR.cs</div>
<svg class="a" style="left:35px;top:491.0px" width="9" height="14" viewBox="0 0 9 14"><path d="M1,1 L7.5,7 L1,13Z" fill="#fff" stroke="#1E1E1E" stroke-width="1.4" stroke-linejoin="miter"/></svg>
<div class="t" style="left:63px;top:492.0px;font-size:11.5px;font-weight:bold;color:#3E9A3E">C<span style="font-size:8.5px;vertical-align:2px">#</span></div>
<div class="t" style="left:86px;top:491.5px;font-size:14.5px;color:#1E1E1E">PriceMaxVolume</div>
<svg class="a" style="left:35px;top:514.0px" width="9" height="14" viewBox="0 0 9 14"><path d="M1,1 L7.5,7 L1,13Z" fill="#fff" stroke="#1E1E1E" stroke-width="1.4" stroke-linejoin="miter"/></svg>
<div class="t" style="left:63px;top:515.0px;font-size:11.5px;font-weight:bold;color:#3E9A3E">C<span style="font-size:8.5px;vertical-align:2px">#</span></div>
<div class="t" style="left:86px;top:514.5px;font-size:14.5px;color:#1E1E1E">SellVolumeDelta</div>
<svg class="a" style="left:35px;top:537.0px" width="9" height="14" viewBox="0 0 9 14"><path d="M1,1 L7.5,7 L1,13Z" fill="#fff" stroke="#1E1E1E" stroke-width="1.4" stroke-linejoin="miter"/></svg>
<div class="t" style="left:63px;top:538.0px;font-size:11.5px;font-weight:bold;color:#3E9A3E">C<span style="font-size:8.5px;vertical-align:2px">#</span></div>
<div class="t" style="left:86px;top:537.5px;font-size:14.5px;color:#1E1E1E">StohK.cs</div>
<svg class="a" style="left:35px;top:560.0px" width="9" height="14" viewBox="0 0 9 14"><path d="M1,1 L7.5,7 L1,13Z" fill="#fff" stroke="#1E1E1E" stroke-width="1.4" stroke-linejoin="miter"/></svg>
<div class="t" style="left:63px;top:561.0px;font-size:11.5px;font-weight:bold;color:#3E9A3E">C<span style="font-size:8.5px;vertical-align:2px">#</span></div>
<div class="t" style="left:86px;top:560.5px;font-size:14.5px;color:#1E1E1E">TrAtr.cs</div>
<svg class="a" style="left:35px;top:583.0px" width="9" height="14" viewBox="0 0 9 14"><path d="M1,1 L7.5,7 L1,13Z" fill="#fff" stroke="#1E1E1E" stroke-width="1.4" stroke-linejoin="miter"/></svg>
<div class="t" style="left:63px;top:584.0px;font-size:11.5px;font-weight:bold;color:#3E9A3E">C<span style="font-size:8.5px;vertical-align:2px">#</span></div>
<div class="t" style="left:86px;top:583.5px;font-size:14.5px;color:#1E1E1E">Trix.cs</div>
<svg class="a" style="left:35px;top:606.0px" width="9" height="14" viewBox="0 0 9 14"><path d="M1,1 L7.5,7 L1,13Z" fill="#fff" stroke="#1E1E1E" stroke-width="1.4" stroke-linejoin="miter"/></svg>
<div class="t" style="left:63px;top:607.0px;font-size:11.5px;font-weight:bold;color:#3E9A3E">C<span style="font-size:8.5px;vertical-align:2px">#</span></div>
<div class="t" style="left:86px;top:606.5px;font-size:14.5px;color:#1E1E1E">Volum.cs</div>
<svg class="a" style="left:35px;top:629.0px" width="9" height="14" viewBox="0 0 9 14"><path d="M1,1 L7.5,7 L1,13Z" fill="#fff" stroke="#1E1E1E" stroke-width="1.4" stroke-linejoin="miter"/></svg>
<div class="t" style="left:63px;top:630.0px;font-size:11.5px;font-weight:bold;color:#3E9A3E">C<span style="font-size:8.5px;vertical-align:2px">#</span></div>
<div class="t" style="left:86px;top:629.5px;font-size:14.5px;color:#1E1E1E">VWAP.cs</div>
<svg class="a" style="left:13px;top:652.0px" width="9" height="14" viewBox="0 0 9 14"><path d="M1,1 L7.5,7 L1,13Z" fill="#fff" stroke="#1E1E1E" stroke-width="1.4"/></svg>
<div class="a" style="left:39px;top:651.0px;width:18px;height:15px;border:1.5px solid #3E9A3E;background:#fff"><div class="t" style="left:1px;top:1.5px;font-size:10px;font-weight:bold;color:#555;letter-spacing:-0.5px">C#</div></div>
<div class="t" style="left:64px;top:652.5px;font-size:14.5px;color:#1E1E1E">Kom.Helpers</div>
<div class="a" style="left:39px;top:674.0px;width:18px;height:15px;border:1.5px solid #3E9A3E;background:#fff"><div class="t" style="left:1px;top:1.5px;font-size:10px;font-weight:bold;color:#555;letter-spacing:-0.5px">C#</div></div>
</div>

<!-- ============ WATCH ============ -->
<div class="a" style="left:8px;top:798px;width:1679px;height:211px;background:#fff;border:1px solid #8E9BB8"></div>
<div class="a" style="left:9px;top:799px;width:1677px;height:28px;background:#4D6082"></div>
<div class="t" style="left:13px;top:806px;font-size:14.5px;color:#fff">Watch 1</div>
<div class="a" style="left:1623px;top:810px;width:0;height:0;border-left:5px solid transparent;border-right:5px solid transparent;border-top:5px solid #D5DBE6"></div>
<svg class="a" style="left:1643px;top:806px" width="10" height="14" viewBox="0 0 10 14"><path d="M2,0.7 H8 M3,0.7 V8 M7,0.7 V8 M0.5,8 H9.5 M5,8 V14" fill="none" stroke="#E0E4EC" stroke-width="1.4"/><rect x="3" y="1" width="2" height="7" fill="#E0E4EC"/></svg>
<svg class="a" style="left:1664px;top:807px" width="12" height="12" viewBox="0 0 12 12"><path d="M1,1 L11,11 M11,1 L1,11" stroke="#E8ECF2" stroke-width="1.5"/></svg>
<div class="a" style="left:1664px;top:827px;width:22px;height:181px;background:#E8E8EC"></div>
<div class="a" style="left:1669px;top:835px;width:0;height:0;border-left:5.5px solid transparent;border-right:5.5px solid transparent;border-bottom:6px solid #C6C9D2"></div>
<div class="a" style="left:9px;top:851px;width:1655px;height:1px;background:#E2E2E2"></div>
<div class="a" style="left:9px;top:873px;width:1655px;height:1px;background:#F0F0F0"></div>
<div class="a" style="left:19px;top:827px;width:1px;height:47px;background:#EDEDED"></div>
<div class="a" style="left:546px;top:827px;width:1px;height:47px;background:#EDEDED"></div>
<div class="a" style="left:1600px;top:827px;width:1px;height:47px;background:#EDEDED"></div>
<div class="t" style="left:25px;top:833px;font-size:14.5px;color:#A0A0A0">Name</div>
<div class="t" style="left:551px;top:833px;font-size:14.5px;color:#A0A0A0">Value</div>
<div class="t" style="left:1606px;top:833px;font-size:14.5px;color:#A0A0A0">Type</div>

<!-- ============ STATUS BAR ============ -->
<div class="a" style="left:0;top:1016px;width:1920px;height:30px;background:#CA5100"></div>
<div class="t" style="left:5px;top:1024.5px;font-size:15px;color:#fff">Ready</div>

<!-- ============ TASKBAR ============ -->
<div class="a" style="left:0;top:1046px;width:1920px;height:34px;background:#8494AA;border-top:1px solid #4E5C70"></div>
<div class="a" style="left:66px;top:1047px;width:427px;height:33px;background:#E4F4FC"></div>
<div class="t" style="left:83px;top:1053px;font-size:20.3px;color:#111">Голосовой помощник Алиса</div>
<svg class="a" style="left:451px;top:1049px" width="25" height="28" viewBox="0 0 25 28"><rect x="8" y="1" width="10" height="14" rx="5" fill="#111"/><path d="M4.5,13 Q4.5,22 13,22 Q21.5,22 21.5,13 M13,22 V27" fill="none" stroke="#111" stroke-width="2"/><path d="M1,25 L24,2" stroke="#E4F4FC" stroke-width="5"/><path d="M1,25 L24,2" stroke="#111" stroke-width="2.2"/></svg>
<svg class="a" style="left:10px;top:1038px" width="46" height="46" viewBox="0 0 46 46"><defs><radialGradient id="orb" cx="50%" cy="35%" r="60%"><stop offset="0" stop-color="#9FC6E0"/><stop offset="0.45" stop-color="#2A6FA6"/><stop offset="0.8" stop-color="#0D4A86"/><stop offset="1" stop-color="#19B8E8"/></radialGradient></defs><circle cx="23" cy="23" r="21.5" fill="url(#orb)" stroke="#D8E6F0" stroke-width="1"/><path d="M12,15 C15,13 18,13 21,15 L19,22 C16,20 13,20 10,22Z" fill="#F0522A"/><path d="M23,16 C26,18 29,18 33,16 L31,23 C28,25 25,25 21,23Z" fill="#7CC040"/><path d="M10,24 C13,22 16,22 19,24 L17,31 C14,29 11,29 8,31Z" fill="#3BA0E8"/><path d="M21,25 C24,27 27,27 31,25 L29,32 C26,34 23,34 19,32Z" fill="#FFC21A"/></svg>
<svg class="a" style="left:513px;top:1053px" width="21" height="20" viewBox="0 0 21 20"><path d="M1,7 L9,1 L18,8 L10,15Z" fill="#3C4A3C" stroke="#9AA89A" stroke-width="1"/><path d="M7,6 L9,8 L7,10" stroke="#8CD070" stroke-width="1.2" fill="none"/><circle cx="15" cy="15" r="4" fill="#E02020" stroke="#fff" stroke-width="0.8"/></svg>
<div class="a" style="left:547px;top:1047px;width:89px;height:33px;border:1px solid #5B6A80;border-radius:3px;background:linear-gradient(#A6B3C5,#8E9FB4);box-shadow:inset 0 1px 0 rgba(255,255,255,0.45),inset 0 0 0 1px rgba(255,255,255,0.2)"></div>
<svg class="a" style="left:555px;top:1052px" width="20" height="20" viewBox="0 0 20 20"><rect x="0" y="0" width="20" height="20" fill="#fff"/><rect x="2" y="2" width="16" height="16" fill="#1A3C9C"/><ellipse cx="10" cy="10" rx="8" ry="6" fill="#F0E020"/><path d="M2,9 L6,6 L8,8 L10,5 L12,8 L14,6 L18,9 L15,14 L12,12 L10,15 L8,12 L5,14Z" fill="#111"/></svg>
<div class="t" style="left:581px;top:1056px;font-size:14.5px;color:#fff;letter-spacing:-0.2px;text-shadow:0 0 2px rgba(0,0,0,0.3)">The B...</div>
<svg class="a" style="left:651px;top:1051px" width="20" height="22" viewBox="0 0 20 22"><rect x="1" y="2" width="16" height="19" fill="#E8F0E0" stroke="#888" stroke-width="0.8"/><rect x="1" y="12" width="16" height="9" fill="#58C040"/><path d="M5,6 V14 M8,9 H12" stroke="#222" stroke-width="1.4"/><path d="M18,1 L11,15" stroke="#E0A020" stroke-width="2.2"/></svg>
<svg class="a" style="left:695px;top:1051px" width="20" height="22" viewBox="0 0 20 22"><rect x="6" y="2" width="13" height="18" fill="#fff" stroke="#9AB" stroke-width="0.8"/><rect x="0" y="4" width="13" height="14" fill="#2A5CAA"/><text x="1" y="16" font-family="Liberation Sans" font-weight="bold" font-size="12" fill="#fff">W</text></svg>
<svg class="a" style="left:737px;top:1051px" width="20" height="22" viewBox="0 0 20 22"><circle cx="10" cy="11" r="9.5" fill="#3A3A30"/><circle cx="10" cy="11" r="7" fill="#707060" stroke="#C0B070" stroke-width="1"/><text x="2" y="19" font-family="Liberation Sans" font-weight="bold" font-size="7" fill="#7CD040">mcm</text></svg>
<svg class="a" style="left:781px;top:1051px" width="20" height="22" viewBox="0 0 20 22"><path d="M2,4 L14,1 L18,16 L6,20Z" fill="#4A9ACF" stroke="#2A6A9F" stroke-width="0.8"/><path d="M7,6 L13,5 M8,9 L14,8" stroke="#BFE0F5" stroke-width="1"/></svg>
<svg class="a" style="left:825px;top:1051px" width="20" height="22" viewBox="0 0 20 22"><rect x="1" y="8" width="16" height="13" fill="#E0E8D0" stroke="#999" stroke-width="0.7"/><path d="M3,14 H14 M6,10 V20" stroke="#6BB040" stroke-width="1.5"/><circle cx="13" cy="6" r="5.5" fill="#F07A20"/><path d="M10,10 L13,16 L16,10Z" fill="#F07A20"/><text x="10.7" y="9" font-family="Liberation Sans" font-weight="bold" font-size="8" fill="#fff">2</text></svg>
<svg class="a" style="left:870px;top:1051px" width="20" height="22" viewBox="0 0 20 22"><rect x="6" y="2" width="13" height="18" fill="#fff" stroke="#9A9" stroke-width="0.8"/><rect x="0" y="4" width="13" height="14" fill="#1E7A3E"/><text x="2" y="16" font-family="Liberation Sans" font-weight="bold" font-size="12" fill="#fff">X</text><path d="M13,8 H18 M13,12 H18 M13,16 H18" stroke="#6A6" stroke-width="1"/></svg>
<svg class="a" style="left:913px;top:1051px" width="20" height="22" viewBox="0 0 20 22"><rect x="0" y="1" width="20" height="20" rx="4" fill="#2CA58D"/><circle cx="10" cy="10.5" r="5.5" fill="none" stroke="#fff" stroke-width="2.5"/><path d="M12,13 L15,16" stroke="#fff" stroke-width="2.5"/></svg>
<div class="a" style="left:947px;top:1047px;width:88px;height:33px;border:1px solid #5B6A80;border-radius:3px;background:linear-gradient(#A6B3C5,#8E9FB4);box-shadow:inset 0 1px 0 rgba(255,255,255,0.45),inset 0 0 0 1px rgba(255,255,255,0.2)"></div>
<svg class="a" style="left:953px;top:1053px" width="20" height="20" viewBox="0 0 20 20"><rect x="0" y="0" width="20" height="20" fill="#1B2E4A"/><rect x="3" y="12" width="2.5" height="6" fill="#fff"/><rect x="7" y="10" width="2.5" height="8" fill="#fff"/><rect x="11" y="13" width="2.5" height="5" fill="#fff"/><rect x="15" y="6" width="2.5" height="12" fill="#F5B400"/></svg>
<div class="t" style="left:977px;top:1056px;font-size:14.5px;color:#fff;letter-spacing:-0.2px;text-shadow:0 0 2px rgba(0,0,0,0.3)">TSLab...</div>
<svg class="a" style="left:1048px;top:1051px" width="20" height="22" viewBox="0 0 20 22"><rect x="1" y="3" width="18" height="18" rx="4" fill="#222"/><path d="M3,6 A8,8 0 0 1 13,1" stroke="#E02020" stroke-width="2.5" fill="none"/><text x="3" y="17" font-family="Liberation Sans" font-weight="bold" font-size="11" fill="#fff">W</text></svg>
<svg class="a" style="left:1091px;top:1051px" width="20" height="22" viewBox="0 0 20 22"><path d="M4,2 H19 L15,20 H0Z" fill="#A8E0A0" stroke="#5A9A50" stroke-width="0.8"/><path d="M6,6 H16 M5,10 H15" stroke="#7AC070" stroke-width="0.8"/></svg>
<div class="a" style="left:1125px;top:1047px;width:88px;height:33px;border:1px solid #5B6A80;border-radius:3px;background:linear-gradient(#A6B3C5,#8E9FB4);box-shadow:inset 0 1px 0 rgba(255,255,255,0.45),inset 0 0 0 1px rgba(255,255,255,0.2)"></div>
<svg class="a" style="left:1131px;top:1050px" width="22" height="22" viewBox="0 0 22 22"><circle cx="11" cy="11" r="10" fill="#FF7A1A"/><circle cx="11" cy="11" r="6" fill="#6A2FB8"/><path d="M3,6 A10,10 0 0 1 15,2 L12,7Z" fill="#FFC21A"/></svg>
<div class="t" style="left:1155px;top:1056px;font-size:14.5px;color:#fff;letter-spacing:-0.2px;text-shadow:0 0 2px rgba(0,0,0,0.3)">Ваш з...</div>
<svg class="a" style="left:1226px;top:1051px" width="20" height="22" viewBox="0 0 20 22"><rect x="1" y="3" width="18" height="14" fill="#E8F0F8" stroke="#7A9AC0" stroke-width="1"/><rect x="6" y="17" width="8" height="3" fill="#9AB0CC"/><circle cx="14" cy="12" r="2" fill="#E03030"/></svg>
<svg class="a" style="left:1268px;top:1051px" width="20" height="22" viewBox="0 0 20 22"><rect x="1" y="2" width="18" height="18" fill="#1A3AA0"/><rect x="4" y="2" width="12" height="6" fill="#fff"/><rect x="4" y="12" width="12" height="8" fill="#E03030"/></svg>
<svg class="a" style="left:1312px;top:1051px" width="20" height="22" viewBox="0 0 20 22"><path d="M1,2 H14 L19,11 L14,20 H1Z" fill="#fff" stroke="#ccc" stroke-width="0.8"/><text x="3" y="17" font-family="Liberation Sans" font-weight="bold" font-size="14" fill="#E0201A">Я</text></svg>
<svg class="a" style="left:1357px;top:1051px" width="20" height="22" viewBox="0 0 20 22"><path d="M10,1 L19,20 L10,15 L1,20Z" fill="#E0201A"/></svg>
<svg class="a" style="left:1398px;top:1051px" width="20" height="22" viewBox="0 0 20 22"><circle cx="10" cy="11" r="9.5" fill="#1E9BE8"/><text x="5" y="16" font-family="Liberation Sans" font-weight="bold" font-size="13" fill="#fff">S</text></svg>
<div class="a" style="left:1432px;top:1047px;width:88px;height:33px;border:1px solid #5B6A80;border-radius:3px;background:linear-gradient(#A6B3C5,#8E9FB4);box-shadow:inset 0 1px 0 rgba(255,255,255,0.45),inset 0 0 0 1px rgba(255,255,255,0.2)"></div>
<svg class="a" style="left:1438px;top:1051px" width="20" height="22" viewBox="0 0 20 22"><ellipse cx="10" cy="11" rx="9" ry="10" fill="#E0141E"/><ellipse cx="10" cy="11" rx="4" ry="7" fill="#8494AA"/></svg>
<div class="t" style="left:1462px;top:1056px;font-size:14.5px;color:#fff;letter-spacing:-0.2px;text-shadow:0 0 2px rgba(0,0,0,0.3)">Scree...</div>
<div class="a" style="left:1523px;top:1047px;width:89px;height:33px;border:1px solid #5B6A80;border-radius:3px;background:linear-gradient(#A6B3C5,#8E9FB4);box-shadow:inset 0 1px 0 rgba(255,255,255,0.45),inset 0 0 0 1px rgba(255,255,255,0.2)"></div>
<svg class="a" style="left:1528px;top:1053px" width="20" height="20" viewBox="0 0 20 20"><rect x="0" y="0" width="20" height="20" fill="#1B2E4A"/><rect x="3" y="12" width="2.5" height="6" fill="#fff"/><rect x="7" y="10" width="2.5" height="8" fill="#fff"/><rect x="11" y="13" width="2.5" height="5" fill="#fff"/><rect x="15" y="6" width="2.5" height="12" fill="#F5B400"/></svg>
<div class="t" style="left:1554px;top:1056px;font-size:14.5px;color:#fff;letter-spacing:-0.2px;text-shadow:0 0 2px rgba(0,0,0,0.3)">TSLab...</div>
<div class="a" style="left:1615px;top:1047px;width:89px;height:33px;border:1px solid #5B6A80;border-radius:3px;background:linear-gradient(#B4C0D0,#98A8BC);box-shadow:inset 0 1px 0 rgba(255,255,255,0.45),inset 0 0 0 1px rgba(255,255,255,0.2)"></div>
<svg class="a" style="left:1622px;top:1051px" width="20" height="22" viewBox="0 0 20 22"><path d="M0,6.5 L4,4.5 L10,10 L16,1 L20,3 V19 L16,21 L10,12 L4,17.5 L0,15.5Z M4,8 V14 L7,11Z M16,6.5 L12,11 L16,15.5Z" fill="#68217A" fill-rule="evenodd"/></svg>
<div class="t" style="left:1646px;top:1056px;font-size:14.5px;color:#fff;letter-spacing:-0.2px;text-shadow:0 0 2px rgba(0,0,0,0.3)">Komis...</div>
<div class="t" style="left:1717px;top:1055px;font-size:14px;color:#fff">EN</div>
<div class="a" style="left:1758px;top:1060px;width:0;height:0;border-left:5px solid transparent;border-right:5px solid transparent;border-bottom:6px solid #fff"></div>
<svg class="a" style="left:1785px;top:1050px" width="22" height="22" viewBox="0 0 22 22"><rect x="0" y="1" width="7" height="11" fill="#fff" stroke="#222" stroke-width="1"/><rect x="5" y="7" width="16" height="11" fill="#F0F4F8" stroke="#222" stroke-width="1.2"/><path d="M10,18 V21 M7,21 H17" stroke="#222" stroke-width="1.2"/></svg>
<svg class="a" style="left:1816px;top:1050px" width="21" height="22" viewBox="0 0 21 22"><path d="M3,14 A4,4 0 0 1 5,6 A6,6 0 0 1 16,5 A4.5,4.5 0 0 1 18,14Z" fill="#F8F8F8" stroke="#666" stroke-width="1"/><circle cx="14" cy="15" r="5.5" fill="#2AA84A"/><path d="M11,15 L13.5,17.5 L17,12.5" stroke="#fff" stroke-width="1.6" fill="none"/></svg>
<div class="t" style="left:1857px;top:1057px;font-size:14.5px;color:#fff">18:18</div>
<div class="a" style="left:1906px;top:1047px;width:14px;height:33px;background:linear-gradient(90deg,#6A7A90,#9AAABF);border-left:1px solid #4E5C70"></div>
<!-- popup -->
<svg class="a" style="left:1893px;top:1018px" width="27" height="28" viewBox="0 0 27 28"><circle cx="13" cy="14" r="12" fill="#E8F4F8" stroke="#2A4A50" stroke-width="1.5"/></svg>
<div class="a" style="left:1430px;top:910px;width:480px;height:127px;background:#fff;border:1px solid #D4D4D4"></div>
<svg class="a" style="left:1451px;top:928px" width="53" height="53" viewBox="0 0 53 53"><defs><linearGradient id="al" x1="1" y1="0" x2="0" y2="1"><stop offset="0" stop-color="#5A26FF"/><stop offset="1" stop-color="#C42AF0"/></linearGradient><clipPath id="alc"><rect x="0" y="0" width="53" height="52"/></clipPath></defs><circle cx="26.5" cy="26.5" r="26.5" fill="url(#al)" clip-path="url(#alc)"/><path d="M26.5,12 C30,12 40,26 40,33 C40,37 34,38 26.5,38 C19,38 13,37 13,33 C13,26 23,12 26.5,12Z" fill="#fff"/></svg>
<div class="t" style="left:1519px;top:931px;font-size:16.4px;font-weight:bold;color:#111">Алиса: погода на завтра</div>
<div class="t" style="left:1519px;top:955px;font-size:15.8px;color:#111">Улицы станут красивее. Завтра небольшой</div>
<div class="t" style="left:1519px;top:976.5px;font-size:15.8px;color:#111">дождь. Днём 0...1 °C, ночью -3...-2 °C</div>
<div class="t" style="left:1519px;top:998px;font-size:14.6px;color:#8A8A8A">yandex.ru</div>
<svg class="a" style="left:1859px;top:920px" width="17" height="17" viewBox="0 0 17 17"><g fill="none" stroke="#9A9A9A" stroke-width="1"><circle cx="8.5" cy="8.5" r="2.5"/><path d="M7,1 H10 L10.5,3.2 L12.5,4.2 L14.5,3 L16,5.5 L14.2,7 V10 L16,11.5 L14.5,14 L12.5,12.8 L10.5,13.8 L10,16 H7 L6.5,13.8 L4.5,12.8 L2.5,14 L1,11.5 L2.8,10 V7 L1,5.5 L2.5,3 L4.5,4.2 L6.5,3.2Z"/></g></svg>
<svg class="a" style="left:1887px;top:922px" width="12" height="12" viewBox="0 0 12 12"><path d="M1,1 L11,11 M11,1 L1,11" stroke="#7A7A7A" stroke-width="1.3"/></svg>

</body></html>
